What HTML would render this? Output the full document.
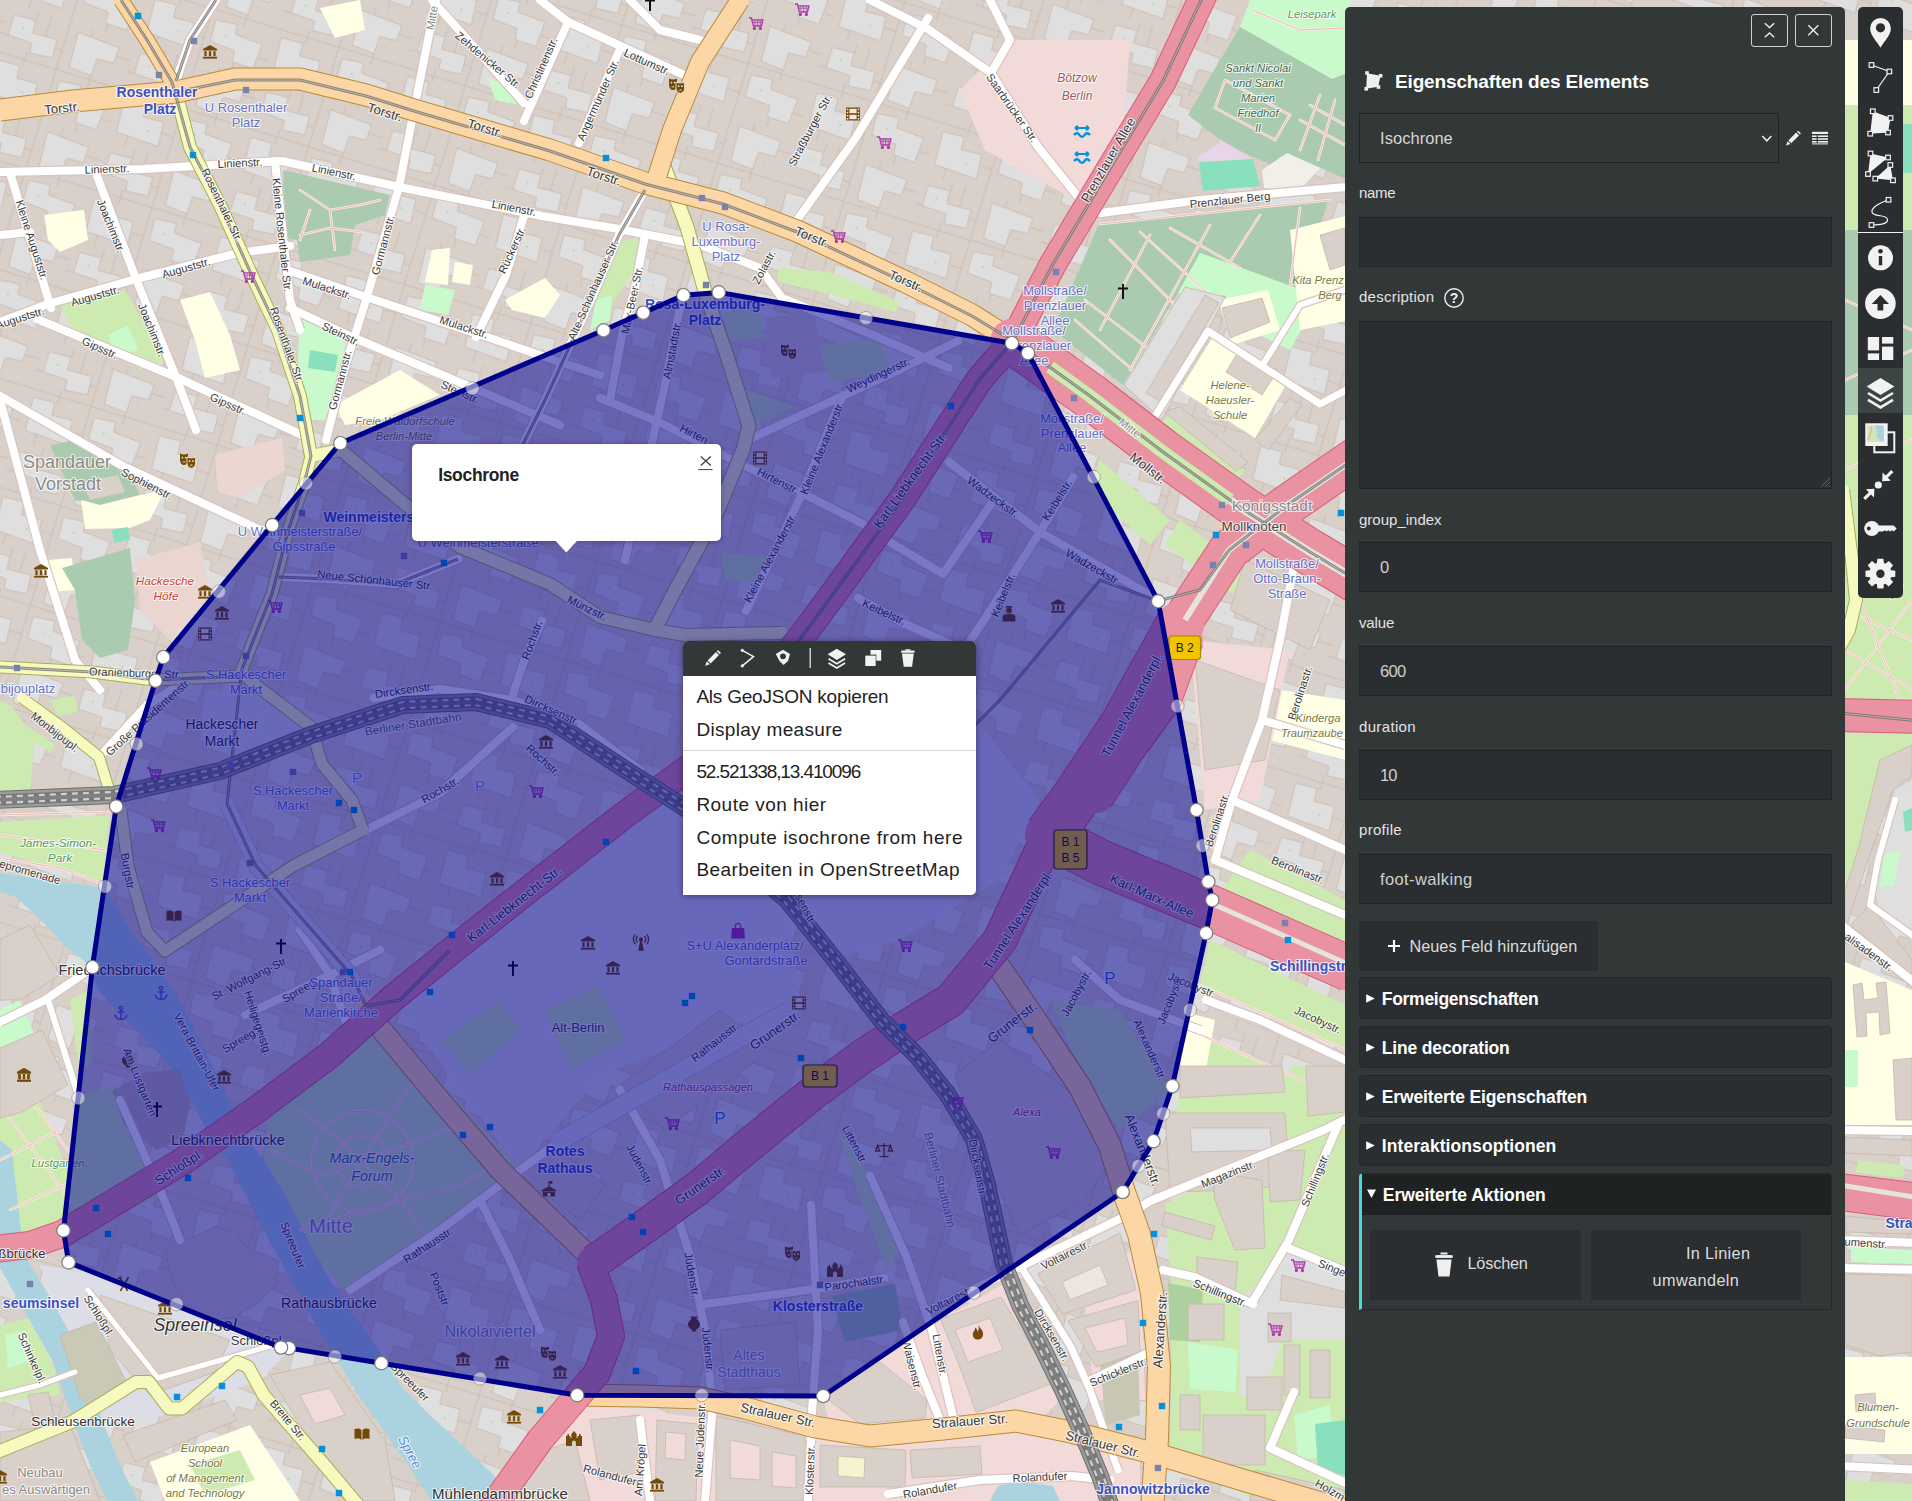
<!DOCTYPE html>
<html lang="de"><head><meta charset="utf-8"><title>uMap</title><style>
html,body{margin:0;padding:0}
body{width:1912px;height:1501px;overflow:hidden;position:relative;background:#ddd6cf;font-family:"Liberation Sans",sans-serif}
#map,#ov{position:absolute;left:0;top:0}

#panel{position:absolute;left:1345px;top:7px;width:500px;height:1500px;background:#323737;border-radius:5px 5px 0 0;}
#panel>*{margin-left:-1345px;margin-top:-7px}
.t{position:absolute;white-space:nowrap;font-family:"Liberation Sans",sans-serif;}
.pbtn{position:absolute;width:37px;height:33px;box-sizing:border-box;border:1px solid #cfd0d0;border-radius:3px;}
.pbtn svg{position:absolute;left:-1px;top:-1px}
.sel{position:absolute;box-sizing:border-box;border:1px solid #1f2324;background:#323737;}
.inp{position:absolute;box-sizing:border-box;border:1px solid #202425;background:#2a2e30;}
.btn{position:absolute;background:#2a2e30;}
.fs{position:absolute;box-sizing:border-box;border:1px solid #222627;background:#2a2e30;border-radius:4px;}
.fso{position:absolute;box-sizing:border-box;border:1px solid #262a2b;border-left:3px solid #46dcd6;background:#323737;border-radius:4px 4px 0 0;}
.fsh{position:absolute;left:0;top:0;right:0;height:41px;background:#1f2223;border-radius:0 4px 0 0}

#tb{position:absolute;left:1858px;top:7px;width:45px;height:591px;background:#2a2e30;border-radius:5px;overflow:hidden}
#pop{position:absolute;left:412px;top:444px;width:309px;height:96.6px;background:#fff;border-radius:5px;box-shadow:0 1px 6px rgba(0,0,0,.3)}
#ctx{position:absolute;left:683px;top:641px;width:293px;height:253.7px;background:#fff;border-radius:5px 5px 5px 0;box-shadow:0 1px 7px rgba(0,0,0,.4);overflow:hidden}
#ctxh{position:absolute;left:0;top:0;width:100%;height:34.5px;background:#323737}
#ctxsep{position:absolute;left:0;top:109px;width:100%;height:1px;background:#d4d4d4}
</style></head><body>
<svg id="map" width="1912" height="1501" viewBox="0 0 1912 1501" font-family="Liberation Sans, sans-serif">
<rect width="1912" height="1501" fill="#ddd6cf"/>
<defs><pattern id="bp" width="132" height="104" patternUnits="userSpaceOnUse" patternTransform="rotate(17) translate(10 0)">
<rect width="132" height="104" fill="#d9d0c9"/>
<polygon points="8.0,10.0 30.0,9.0 31.0,22.0 56.0,21.0 57.0,40.0 34.0,42.0 33.0,32.0 8.0,31.0" fill="#e0dfdf" stroke="#c6b9ae" stroke-width="0.8"/>
<polygon points="74.0,8.0 118.0,11.0 117.0,27.0 100.0,28.0 99.0,46.0 76.0,44.0" fill="#e0dfdf" stroke="#c6b9ae" stroke-width="0.8"/>
<polygon points="6.0,58.0 28.0,57.0 29.0,70.0 50.0,69.0 52.0,94.0 8.0,92.0" fill="#e0dfdf" stroke="#c6b9ae" stroke-width="0.8"/>
<polygon points="70.0,60.0 92.0,58.0 93.0,68.0 122.0,70.0 120.0,96.0 98.0,95.0 97.0,84.0 71.0,82.0" fill="#e0dfdf" stroke="#c6b9ae" stroke-width="0.8"/>
<path d="M0 50 H132 M64 0 V104 M31 0 V9 M31 42 V57 M99 46 V58 M8 31 H0 M57 30 H64 M118 20 H132 M52 80 H64 M122 84 H132 M20 92 V104 M100 95 V104 M44 0 V21 M88 0 V9" stroke="#c6b9ae" stroke-width="0.8" fill="none"/>
<circle cx="20" cy="20" r="1" fill="#b5d6a0"/><circle cx="108" cy="36" r="1" fill="#b5d6a0"/><circle cx="38" cy="82" r="1" fill="#b5d6a0"/><circle cx="84" cy="72" r="1" fill="#b5d6a0"/>
</pattern></defs>
<rect width="1912" height="1501" fill="url(#bp)"/>
<polygon points="1240.0,27.0 1250.0,0.0 1350.0,0.0 1350.0,72.0 1332.0,79.0" fill="#c8facc"/>
<polygon points="1240.0,27.0 1332.0,79.0 1350.0,72.0 1350.0,181.0 1287.0,153.0 1278.0,168.0 1253.0,157.0 1222.0,141.0 1188.0,115.0 1213.0,72.0" fill="#aacbaf"/>
<polygon points="1198.0,157.0 1222.0,141.0 1253.0,159.0 1199.0,163.0" fill="#e8d5e8"/>
<polygon points="1262.0,170.0 1287.0,153.0 1320.0,168.0 1300.0,190.0 1264.0,188.0" fill="#f2efe9"/>
<polygon points="1199.0,162.0 1253.0,159.0 1260.0,186.0 1203.0,191.0" fill="#88e0be"/>
<polygon points="1099.0,224.0 1328.0,200.0 1302.0,290.0 1200.0,253.0 1178.0,293.0 1123.0,385.0 1085.0,355.0 1053.0,330.0" fill="#aacbaf"/>
<polygon points="1200.0,253.0 1302.0,290.0 1318.0,300.0 1290.0,350.0 1250.0,330.0 1225.0,295.0 1190.0,300.0 1178.0,293.0" fill="#c8facc"/>
<polygon points="1010.0,40.0 1130.0,40.0 1120.0,175.0 1075.0,200.0 985.0,150.0 960.0,90.0" fill="#f2dad9"/>
<polygon points="1180.0,390.0 1212.0,338.0 1286.0,385.0 1255.0,438.0" fill="#ffffe5"/>
<polygon points="1218.0,300.0 1268.0,290.0 1280.0,330.0 1232.0,345.0" fill="#ffffe5"/>
<polygon points="1158.0,425.0 1170.0,415.0 1245.0,470.0 1236.0,482.0" fill="#cdebb0"/>
<polygon points="1290.0,230.0 1350.0,215.0 1350.0,320.0 1300.0,330.0" fill="#ffffe5"/>
<polygon points="283.0,170.0 390.0,195.0 385.0,215.0 355.0,225.0 350.0,255.0 300.0,262.0 297.0,240.0 285.0,238.0" fill="#aacbaf"/>
<polygon points="44.0,215.0 84.0,210.0 88.0,240.0 60.0,252.0 48.0,240.0" fill="#ffffe5"/>
<polygon points="320.0,8.0 360.0,0.0 365.0,30.0 335.0,38.0" fill="#ffffe5"/>
<polygon points="488.0,78.0 505.0,85.0 520.0,105.0 495.0,100.0" fill="#c8facc"/>
<polygon points="432.0,250.0 450.0,248.0 448.0,285.0 425.0,282.0" fill="#ffffe5"/>
<polygon points="455.0,262.0 473.0,265.0 470.0,285.0 452.0,282.0" fill="#ffffe5"/>
<polygon points="505.0,300.0 545.0,278.0 560.0,295.0 545.0,318.0 512.0,310.0" fill="#ffffe5"/>
<polygon points="425.0,285.0 455.0,290.0 448.0,315.0 420.0,310.0" fill="#c8facc"/>
<polygon points="60.0,305.0 125.0,290.0 165.0,360.0 140.0,370.0 110.0,345.0 75.0,335.0" fill="#cdebb0"/>
<polygon points="108.0,335.0 128.0,325.0 138.0,350.0 115.0,358.0" fill="#c8facc"/>
<polygon points="180.0,300.0 210.0,292.0 230.0,335.0 240.0,370.0 205.0,378.0 195.0,340.0" fill="#ffffe5"/>
<polygon points="300.0,318.0 340.0,330.0 345.0,350.0 325.0,420.0 305.0,420.0 298.0,360.0" fill="#c8facc"/>
<polygon points="310.0,350.0 338.0,355.0 335.0,372.0 308.0,368.0" fill="#88e0be"/>
<polygon points="335.0,405.0 400.0,370.0 440.0,395.0 380.0,420.0 345.0,425.0" fill="#ffffe5"/>
<polygon points="615.0,242.0 638.0,238.0 640.0,262.0 615.0,300.0 596.0,325.0 598.0,290.0" fill="#cdebb0"/>
<polygon points="596.0,300.0 612.0,295.0 610.0,320.0 590.0,330.0" fill="#c8facc"/>
<polygon points="778.0,268.0 830.0,272.0 900.0,302.0 896.0,312.0 830.0,294.0 778.0,282.0" fill="#cdebb0"/>
<polygon points="50.0,445.0 75.0,440.0 130.0,475.0 140.0,495.0 100.0,505.0 75.0,500.0" fill="#aacbaf"/>
<polygon points="82.0,482.0 118.0,475.0 125.0,492.0 90.0,500.0" fill="#d9d0c9"/>
<polygon points="81.0,500.0 100.0,505.0 140.0,495.0 165.0,490.0 150.0,520.0 130.0,528.0 85.0,529.0" fill="#ffffe5"/>
<polygon points="112.0,530.0 128.0,527.0 130.0,540.0 114.0,543.0" fill="#88e0be"/>
<polygon points="48.0,560.0 72.0,558.0 75.0,590.0 50.0,592.0" fill="#ffffe5"/>
<polygon points="62.0,568.0 130.0,548.0 135.0,600.0 128.0,650.0 100.0,658.0 82.0,640.0 75.0,590.0" fill="#aacbaf"/>
<polygon points="136.0,560.0 200.0,542.0 212.0,600.0 170.0,640.0 140.0,610.0" fill="#ead5d0"/>
<polygon points="215.0,455.0 282.0,438.0 285.0,470.0 240.0,498.0 218.0,492.0" fill="#ecd6d2"/>
<polygon points="0.0,700.0 12.0,706.0 35.0,740.0 30.0,790.0 0.0,792.0" fill="#cdebb0"/>
<polygon points="22.0,722.0 55.0,745.0 50.0,752.0 20.0,733.0" fill="#cdebb0"/>
<polygon points="50.0,700.0 75.0,696.0 78.0,712.0 58.0,716.0" fill="#cdebb0"/>
<polygon points="0.0,822.0 110.0,815.0 103.0,881.0 60.0,870.0 0.0,852.0" fill="#cdebb0"/>
<polygon points="0.0,1090.0 30.0,1075.0 75.0,1190.0 62.0,1232.0 20.0,1240.0 0.0,1200.0" fill="#cdebb0"/>
<polygon points="0.0,1010.0 20.0,1000.0 45.0,1060.0 20.0,1075.0 0.0,1060.0" fill="#c8facc"/>
<polygon points="70.0,1000.0 90.0,990.0 92.0,1060.0 80.0,1075.0" fill="#cdebb0"/>
<polygon points="1215.0,905.0 1345.0,965.0 1345.0,985.0 1212.0,925.0" fill="#cdebb0"/>
<polygon points="1210.0,940.0 1345.0,1005.0 1345.0,1050.0 1200.0,985.0" fill="#cdebb0"/>
<polygon points="1190.0,1030.0 1345.0,1100.0 1345.0,1200.0 1280.0,1170.0 1175.0,1120.0" fill="#cdebb0"/>
<polygon points="1185.0,1012.0 1215.0,1020.0 1205.0,1075.0 1180.0,1070.0" fill="#ffffe5"/>
<polygon points="1165.0,1203.0 1345.0,1125.0 1345.0,1501.0 1255.0,1501.0 1170.0,1452.0 1172.0,1300.0" fill="#cdebb0"/>
<polygon points="1168.0,1283.0 1203.0,1290.0 1200.0,1342.0 1170.0,1340.0" fill="#add19e"/>
<polygon points="1188.0,1342.0 1238.0,1350.0 1235.0,1392.0 1190.0,1389.0" fill="#c8facc"/>
<polygon points="1294.0,1415.0 1330.0,1405.0 1335.0,1455.0 1298.0,1460.0" fill="#c8facc"/>
<polygon points="1315.0,1424.0 1345.0,1420.0 1345.0,1475.0 1318.0,1471.0" fill="#88e0be"/>
<polygon points="1240.0,1300.0 1290.0,1250.0 1345.0,1275.0 1345.0,1340.0 1282.0,1340.0 1262.0,1400.0 1240.0,1395.0" fill="#e0dfdf"/>
<polygon points="1290.0,1066.0 1345.0,1066.0 1345.0,1120.0 1300.0,1125.0" fill="#cdebb0"/>
<polygon points="1280.0,690.0 1345.0,700.0 1345.0,760.0 1270.0,740.0" fill="#ffffe5"/>
<polygon points="1190.0,640.0 1290.0,650.0 1260.0,800.0 1205.0,810.0" fill="#f2dad9"/>
<polygon points="1250.0,850.0 1345.0,900.0 1345.0,960.0 1215.0,900.0" fill="#cdebb0"/>
<polygon points="1100.0,460.0 1170.0,520.0 1150.0,545.0 1090.0,490.0" fill="#cdebb0"/>
<polygon points="1180.0,520.0 1260.0,580.0 1240.0,600.0 1165.0,545.0" fill="#cdebb0"/>
<polygon points="823.0,1396.0 890.0,1350.0 1010.0,1280.0 1060.0,1400.0 1040.0,1420.0 950.0,1425.0 830.0,1430.0" fill="#f2dad9"/>
<polygon points="1080.0,1260.0 1140.0,1250.0 1145.0,1400.0 1095.0,1400.0" fill="#f2dad9"/>
<polygon points="985.0,1440.0 1050.0,1435.0 1055.0,1470.0 990.0,1475.0" fill="#cdebb0"/>
<polygon points="0.0,1325.0 30.0,1318.0 55.0,1370.0 60.0,1395.0 0.0,1402.0" fill="#cdebb0"/>
<polygon points="5.0,1335.0 25.0,1330.0 35.0,1360.0 8.0,1368.0" fill="#c8facc"/>
<polygon points="150.0,1462.0 250.0,1425.0 300.0,1501.0 165.0,1501.0" fill="#ffffe5"/>
<polygon points="190.0,1465.0 240.0,1450.0 255.0,1480.0 205.0,1495.0" fill="#cdebb0"/>
<polygon points="560.0,1400.0 840.0,1435.0 960.0,1430.0 1050.0,1425.0 1140.0,1450.0 1140.0,1501.0 480.0,1501.0" fill="#f2dad9"/>
<polygon points="40.0,1265.0 110.0,1275.0 290.0,1350.0 260.0,1380.0 150.0,1420.0 90.0,1420.0 60.0,1320.0" fill="#dddde8"/>
<polygon points="100.0,1295.0 230.0,1340.0 215.0,1372.0 150.0,1395.0 110.0,1350.0" fill="#d9d0c9"/>
<polygon points="1100.0,1365.0 1138.0,1352.0 1140.0,1415.0 1106.0,1425.0" fill="#c7c7b4"/>
<polygon points="1845.0,40.0 1912.0,40.0 1912.0,105.0 1845.0,105.0" fill="#ffffe5"/>
<polygon points="1845.0,105.0 1912.0,105.0 1912.0,700.0 1845.0,700.0" fill="#cdebb0"/>
<polygon points="1845.0,230.0 1912.0,230.0 1912.0,415.0 1845.0,415.0" fill="#aacbaf"/>
<polygon points="1898.0,124.0 1912.0,124.0 1912.0,173.0 1898.0,173.0" fill="#88e0be"/>
<polygon points="1845.0,733.0 1912.0,733.0 1912.0,760.0 1880.0,800.0 1862.0,860.0 1845.0,905.0" fill="#cdebb0"/>
<polygon points="1895.0,790.0 1912.0,780.0 1912.0,940.0 1880.0,915.0 1872.0,870.0" fill="#e0dfdf"/>
<polygon points="1903.0,812.0 1912.0,808.0 1912.0,830.0 1905.0,832.0" fill="#88e0be"/>
<polygon points="1884.0,855.0 1900.0,850.0 1894.0,885.0 1880.0,888.0" fill="#c8facc"/>
<polygon points="1845.0,962.0 1912.0,990.0 1912.0,1125.0 1845.0,1125.0" fill="#ffffe5"/>
<polygon points="1845.0,1050.0 1858.0,1050.0 1858.0,1087.0 1845.0,1087.0" fill="#c8facc"/>
<polygon points="1858.0,1160.0 1905.0,1166.0 1903.0,1178.0 1856.0,1172.0" fill="#cdebb0"/>
<polygon points="1851.0,1247.0 1912.0,1250.0 1912.0,1264.0 1851.0,1262.0" fill="#c8facc"/>
<polygon points="1850.0,1285.0 1895.0,1288.0 1890.0,1330.0 1850.0,1328.0" fill="#e0dfdf"/>
<polygon points="1845.0,1357.0 1912.0,1357.0 1912.0,1454.0 1845.0,1454.0" fill="#ffffe5"/>
<polygon points="1845.0,1480.0 1912.0,1484.0 1912.0,1501.0 1845.0,1501.0" fill="#cdebb0"/>
<polygon points="818.0,345.0 880.0,338.0 891.0,372.0 830.0,382.0" fill="#cdebb0"/>
<polygon points="724.0,312.0 760.0,310.0 764.0,338.0 730.0,341.0" fill="#cdebb0"/>
<polygon points="746.0,389.0 794.0,407.0 755.0,426.0" fill="#cdebb0"/>
<polygon points="721.0,553.0 765.0,556.0 770.0,583.0 725.0,580.0" fill="#cdebb0"/>
<polygon points="765.0,318.0 815.0,312.0 822.0,372.0 772.0,378.0" fill="#d9d0c9"/>
<polygon points="268.0,1118.0 385.0,1020.0 520.0,1170.0 345.0,1290.0 313.0,1251.0 288.0,1200.0 264.0,1160.0" fill="#cdebb0"/>
<polygon points="400.0,1008.0 700.0,775.0 740.0,850.0 790.0,920.0 800.0,1000.0 600.0,1075.0 520.0,1170.0" fill="#dddde8"/>
<polygon points="545.0,1010.0 600.0,985.0 625.0,1040.0 570.0,1070.0" fill="#cdebb0"/>
<polygon points="440.0,1040.0 500.0,1000.0 520.0,1030.0 470.0,1075.0" fill="#cdebb0"/>
<polygon points="790.0,690.0 900.0,640.0 960.0,700.0 1040.0,800.0 1000.0,880.0 900.0,940.0 830.0,960.0 787.0,900.0 736.0,855.0 700.0,790.0" fill="#dddde8"/>
<polygon points="205.0,690.0 300.0,700.0 320.0,740.0 250.0,760.0 200.0,740.0" fill="#dddde8"/>
<polygon points="78.0,1095.0 118.0,1085.0 135.0,1125.0 165.0,1195.0 95.0,1222.0 70.0,1225.0" fill="#cdebb0"/>
<polygon points="1050.0,1000.0 1120.0,1010.0 1170.0,1090.0 1120.0,1130.0 1085.0,1080.0" fill="#cdebb0"/>
<polygon points="838.0,1130.0 872.0,1180.0 900.0,1250.0 888.0,1270.0 862.0,1205.0" fill="#cdebb0"/>
<polygon points="832.0,1296.0 895.0,1284.0 903.0,1330.0 845.0,1342.0" fill="#aacbaf"/>
<polygon points="0.0,873.0 105.0,888.0 116.0,905.0 132.0,933.0 149.0,955.0 176.0,993.0 198.0,1037.0 220.0,1081.0 235.0,1114.0 252.0,1145.0 264.0,1160.0 288.0,1200.0 313.0,1251.0 341.0,1298.0 366.0,1332.0 386.0,1361.0 403.0,1389.0 430.0,1415.0 476.0,1458.0 520.0,1501.0 432.0,1501.0 403.0,1458.0 377.0,1421.0 354.0,1389.0 335.0,1355.0 322.0,1336.0 303.0,1301.0 275.0,1251.0 247.0,1198.0 226.0,1157.0 207.0,1131.0 193.0,1103.0 176.0,1074.0 154.0,1048.0 123.0,1017.0 99.0,991.0 88.0,964.0 66.0,947.0 44.0,923.0 15.0,896.0 0.0,892.0" fill="#aad3df"/>
<polygon points="0.0,1140.0 12.0,1150.0 22.0,1240.0 0.0,1240.0" fill="#aad3df"/>
<polygon points="0.0,1268.0 24.0,1310.0 53.0,1362.0 75.0,1426.0 92.0,1470.0 108.0,1501.0 138.0,1501.0 118.0,1461.0 101.0,1417.0 79.0,1350.0 50.0,1297.0 26.0,1258.0 8.0,1255.0 0.0,1257.0" fill="#aad3df"/>
<polygon points="998.0,1486.0 1020.0,1481.0 1053.0,1486.0 1060.0,1501.0 990.0,1501.0" fill="#aad3df"/>
<g fill="none" stroke-linecap="round">
<path d="M300.0 1110.0 L340.0 1140.0 L362.0 1161.0 L400.0 1200.0 L430.0 1240.0" stroke="#fbeeed" stroke-width="2.6"/>
<path d="M330.0 1215.0 L362.0 1161.0 L400.0 1100.0 L420.0 1075.0" stroke="#fbeeed" stroke-width="2.6"/>
<path d="M270.0 1150.0 L320.0 1175.0 L362.0 1161.0 L420.0 1140.0 L470.0 1120.0" stroke="#fbeeed" stroke-width="2.6"/>
<path d="M300.0 1230.0 L350.0 1215.0 L400.0 1200.0 L460.0 1185.0 L505.0 1160.0" stroke="#fbeeed" stroke-width="2.6"/>
<path d="M1110.0 240.0 L1180.0 310.0" stroke="#fbeeed" stroke-width="2.6"/>
<path d="M1140.0 232.0 L1215.0 300.0" stroke="#fbeeed" stroke-width="2.6"/>
<path d="M1170.0 228.0 L1240.0 268.0" stroke="#fbeeed" stroke-width="2.6"/>
<path d="M1085.0 300.0 L1150.0 350.0" stroke="#fbeeed" stroke-width="2.6"/>
<path d="M1075.0 320.0 L1135.0 372.0" stroke="#fbeeed" stroke-width="2.6"/>
<path d="M1150.0 235.0 L1100.0 330.0" stroke="#fbeeed" stroke-width="2.6"/>
<path d="M1210.0 225.0 L1130.0 370.0" stroke="#fbeeed" stroke-width="2.6"/>
<path d="M1260.0 215.0 L1230.0 262.0" stroke="#fbeeed" stroke-width="2.6"/>
<path d="M1300.0 208.0 L1290.0 286.0" stroke="#fbeeed" stroke-width="2.6"/>
<path d="M1100.0 224.0 L1330.0 200.0" stroke="#fbeeed" stroke-width="2.6"/>
<path d="M1225.0 80.0 L1290.0 115.0 L1275.0 140.0 L1215.0 108.0 L1225.0 80.0" stroke="#fbeeed" stroke-width="2.6"/>
<path d="M1300.0 120.0 L1345.0 145.0" stroke="#fbeeed" stroke-width="2.6"/>
<path d="M1310.0 105.0 L1345.0 125.0" stroke="#fbeeed" stroke-width="2.6"/>
<path d="M1320.0 95.0 L1300.0 150.0" stroke="#fbeeed" stroke-width="2.6"/>
<path d="M1335.0 100.0 L1318.0 160.0" stroke="#fbeeed" stroke-width="2.6"/>
<path d="M1252.0 10.0 L1300.0 30.0 L1345.0 28.0" stroke="#fbeeed" stroke-width="2.6"/>
<path d="M0.0 1105.0 L70.0 1200.0" stroke="#fbeeed" stroke-width="2.6"/>
<path d="M20.0 1085.0 L75.0 1160.0" stroke="#fbeeed" stroke-width="2.6"/>
<path d="M0.0 1160.0 L60.0 1130.0" stroke="#fbeeed" stroke-width="2.6"/>
<path d="M10.0 1210.0 L75.0 1180.0" stroke="#fbeeed" stroke-width="2.6"/>
<path d="M0.0 835.0 L105.0 850.0" stroke="#fbeeed" stroke-width="2.6"/>
<path d="M0.0 858.0 L60.0 868.0 L103.0 884.0" stroke="#fbeeed" stroke-width="2.6"/>
<path d="M0.0 815.0 L110.0 812.0" stroke="#fbeeed" stroke-width="2.6"/>
<path d="M1845.0 610.0 L1912.0 640.0" stroke="#fbeeed" stroke-width="2.6"/>
<path d="M1845.0 690.0 L1912.0 600.0" stroke="#fbeeed" stroke-width="2.6"/>
<path d="M1860.0 600.0 L1900.0 700.0" stroke="#fbeeed" stroke-width="2.6"/>
<path d="M1845.0 650.0 L1912.0 690.0" stroke="#fbeeed" stroke-width="2.6"/>
<path d="M1845.0 300.0 L1912.0 330.0" stroke="#fbeeed" stroke-width="2.6"/>
<path d="M1845.0 380.0 L1912.0 350.0" stroke="#fbeeed" stroke-width="2.6"/>
<path d="M1845.0 470.0 L1912.0 440.0" stroke="#fbeeed" stroke-width="2.6"/>
<path d="M1215.0 925.0 L1345.0 985.0" stroke="#fbeeed" stroke-width="2.6"/>
<path d="M1200.0 985.0 L1345.0 1050.0" stroke="#fbeeed" stroke-width="2.6"/>
<path d="M1190.0 1030.0 L1345.0 1100.0" stroke="#fbeeed" stroke-width="2.6"/>
<path d="M300.0 190.0 L330.0 210.0 L360.0 205.0 L380.0 200.0" stroke="#fbeeed" stroke-width="2.6"/>
<path d="M330.0 210.0 L335.0 250.0" stroke="#fbeeed" stroke-width="2.6"/>
<path d="M300.0 235.0 L330.0 228.0 L362.0 232.0" stroke="#fbeeed" stroke-width="2.6"/>
<path d="M310.0 210.0 L300.0 240.0" stroke="#fbeeed" stroke-width="2.6"/>
<path d="M300.0 1110.0 L340.0 1140.0 L362.0 1161.0 L400.0 1200.0 L430.0 1240.0" stroke="#f3b8b0" stroke-width="1"/>
<path d="M330.0 1215.0 L362.0 1161.0 L400.0 1100.0 L420.0 1075.0" stroke="#f3b8b0" stroke-width="1"/>
<path d="M270.0 1150.0 L320.0 1175.0 L362.0 1161.0 L420.0 1140.0 L470.0 1120.0" stroke="#f3b8b0" stroke-width="1"/>
<path d="M300.0 1230.0 L350.0 1215.0 L400.0 1200.0 L460.0 1185.0 L505.0 1160.0" stroke="#f3b8b0" stroke-width="1"/>
<path d="M1110.0 240.0 L1180.0 310.0" stroke="#f3b8b0" stroke-width="1"/>
<path d="M1140.0 232.0 L1215.0 300.0" stroke="#f3b8b0" stroke-width="1"/>
<path d="M1170.0 228.0 L1240.0 268.0" stroke="#f3b8b0" stroke-width="1"/>
<path d="M1085.0 300.0 L1150.0 350.0" stroke="#f3b8b0" stroke-width="1"/>
<path d="M1075.0 320.0 L1135.0 372.0" stroke="#f3b8b0" stroke-width="1"/>
<path d="M1150.0 235.0 L1100.0 330.0" stroke="#f3b8b0" stroke-width="1"/>
<path d="M1210.0 225.0 L1130.0 370.0" stroke="#f3b8b0" stroke-width="1"/>
<path d="M1260.0 215.0 L1230.0 262.0" stroke="#f3b8b0" stroke-width="1"/>
<path d="M1300.0 208.0 L1290.0 286.0" stroke="#f3b8b0" stroke-width="1"/>
<path d="M1100.0 224.0 L1330.0 200.0" stroke="#f3b8b0" stroke-width="1"/>
<path d="M1225.0 80.0 L1290.0 115.0 L1275.0 140.0 L1215.0 108.0 L1225.0 80.0" stroke="#f3b8b0" stroke-width="1"/>
<path d="M1300.0 120.0 L1345.0 145.0" stroke="#f3b8b0" stroke-width="1"/>
<path d="M1310.0 105.0 L1345.0 125.0" stroke="#f3b8b0" stroke-width="1"/>
<path d="M1320.0 95.0 L1300.0 150.0" stroke="#f3b8b0" stroke-width="1"/>
<path d="M1335.0 100.0 L1318.0 160.0" stroke="#f3b8b0" stroke-width="1"/>
<path d="M1252.0 10.0 L1300.0 30.0 L1345.0 28.0" stroke="#f3b8b0" stroke-width="1"/>
<path d="M0.0 1105.0 L70.0 1200.0" stroke="#f3b8b0" stroke-width="1"/>
<path d="M20.0 1085.0 L75.0 1160.0" stroke="#f3b8b0" stroke-width="1"/>
<path d="M0.0 1160.0 L60.0 1130.0" stroke="#f3b8b0" stroke-width="1"/>
<path d="M10.0 1210.0 L75.0 1180.0" stroke="#f3b8b0" stroke-width="1"/>
<path d="M0.0 835.0 L105.0 850.0" stroke="#f3b8b0" stroke-width="1"/>
<path d="M0.0 858.0 L60.0 868.0 L103.0 884.0" stroke="#f3b8b0" stroke-width="1"/>
<path d="M0.0 815.0 L110.0 812.0" stroke="#f3b8b0" stroke-width="1"/>
<path d="M1845.0 610.0 L1912.0 640.0" stroke="#f3b8b0" stroke-width="1"/>
<path d="M1845.0 690.0 L1912.0 600.0" stroke="#f3b8b0" stroke-width="1"/>
<path d="M1860.0 600.0 L1900.0 700.0" stroke="#f3b8b0" stroke-width="1"/>
<path d="M1845.0 650.0 L1912.0 690.0" stroke="#f3b8b0" stroke-width="1"/>
<path d="M1845.0 300.0 L1912.0 330.0" stroke="#f3b8b0" stroke-width="1"/>
<path d="M1845.0 380.0 L1912.0 350.0" stroke="#f3b8b0" stroke-width="1"/>
<path d="M1845.0 470.0 L1912.0 440.0" stroke="#f3b8b0" stroke-width="1"/>
<path d="M1215.0 925.0 L1345.0 985.0" stroke="#f3b8b0" stroke-width="1"/>
<path d="M1200.0 985.0 L1345.0 1050.0" stroke="#f3b8b0" stroke-width="1"/>
<path d="M1190.0 1030.0 L1345.0 1100.0" stroke="#f3b8b0" stroke-width="1"/>
<path d="M300.0 190.0 L330.0 210.0 L360.0 205.0 L380.0 200.0" stroke="#f3b8b0" stroke-width="1"/>
<path d="M330.0 210.0 L335.0 250.0" stroke="#f3b8b0" stroke-width="1"/>
<path d="M300.0 235.0 L330.0 228.0 L362.0 232.0" stroke="#f3b8b0" stroke-width="1"/>
<path d="M310.0 210.0 L300.0 240.0" stroke="#f3b8b0" stroke-width="1"/>
<circle cx="362.5" cy="1161" r="50" stroke="#fbeeed" stroke-width="2.6"/><circle cx="362.5" cy="1161" r="50" stroke="#f3b8b0" stroke-width="1"/>
<circle cx="362.5" cy="1161" r="26" stroke="#fbeeed" stroke-width="2.6"/><circle cx="362.5" cy="1161" r="26" stroke="#f3b8b0" stroke-width="1"/>
</g>
<polygon points="113.0,1091.0 146.0,1073.0 179.0,1070.0 190.0,1102.0 183.0,1135.0 157.0,1150.0 124.0,1124.0" fill="#c9beb5" stroke="#c4b7ac" stroke-width="0.8"/>
<polygon points="165.0,1251.0 216.0,1226.0 235.0,1235.0 278.0,1282.0 260.0,1301.0 235.0,1317.0 203.0,1320.0 175.0,1288.0" fill="#d9d0c9" stroke="#c4b7ac" stroke-width="0.8"/>
<polygon points="0.0,1048.0 42.0,1030.0 68.0,1085.0 22.0,1112.0 0.0,1118.0" fill="#d9d0c9" stroke="#c4b7ac" stroke-width="0.8"/>
<polygon points="0.0,940.0 30.0,925.0 60.0,975.0 20.0,1000.0 0.0,1000.0" fill="#d9d0c9" stroke="#c4b7ac" stroke-width="0.8"/>
<polygon points="955.0,1075.0 1000.0,1040.0 1075.0,1095.0 1110.0,1160.0 1085.0,1200.0 1020.0,1235.0 985.0,1160.0" fill="#d9d0c9" stroke="#c4b7ac" stroke-width="0.8"/>
<polygon points="545.0,1140.0 605.0,1185.0 580.0,1220.0 520.0,1175.0" fill="#d9d0c9" stroke="#c4b7ac" stroke-width="0.8"/>
<polygon points="620.0,1085.0 720.0,1010.0 770.0,1050.0 665.0,1130.0" fill="#d9d0c9" stroke="#c4b7ac" stroke-width="0.8"/>
<polygon points="760.0,830.0 830.0,800.0 870.0,860.0 800.0,890.0" fill="#d9d0c9" stroke="#c4b7ac" stroke-width="0.8"/>
<polygon points="1195.0,660.0 1280.0,690.0 1265.0,760.0 1205.0,770.0" fill="#d9d0c9" stroke="#c4b7ac" stroke-width="0.8"/>
<polygon points="1245.0,560.0 1330.0,600.0 1310.0,650.0 1230.0,610.0" fill="#d9d0c9" stroke="#c4b7ac" stroke-width="0.8"/>
<polygon points="100.0,1295.0 230.0,1340.0 215.0,1372.0 150.0,1395.0 110.0,1350.0" fill="#d9d0c9" stroke="#c4b7ac" stroke-width="0.8"/>
<polygon points="720.0,1330.0 795.0,1322.0 800.0,1385.0 725.0,1390.0" fill="#d9d0c9" stroke="#c4b7ac" stroke-width="0.8"/>
<polygon points="1880.0,760.0 1912.0,745.0 1912.0,775.0 1893.0,790.0 1868.0,860.0 1850.0,915.0 1845.0,935.0 1845.0,890.0 1858.0,850.0" fill="#d9d0c9" stroke="#c4b7ac" stroke-width="0.8"/>
<polygon points="1850.0,925.0 1912.0,975.0 1912.0,960.0 1870.0,905.0" fill="#d9d0c9" stroke="#c4b7ac" stroke-width="0.8"/>
<polygon points="1853.0,985.0 1862.0,983.0 1864.0,1000.0 1878.0,998.0 1876.0,983.0 1886.0,982.0 1890.0,1033.0 1880.0,1035.0 1879.0,1012.0 1866.0,1013.0 1867.0,1036.0 1857.0,1037.0" fill="#d9d0c9" stroke="#c4b7ac" stroke-width="0.8"/>
<polygon points="1893.0,1060.0 1912.0,1058.0 1912.0,1120.0 1896.0,1120.0" fill="#d9d0c9" stroke="#c4b7ac" stroke-width="0.8"/>
<polygon points="1845.0,1137.0 1912.0,1140.0 1912.0,1156.0 1845.0,1153.0" fill="#d9d0c9" stroke="#c4b7ac" stroke-width="0.8"/>
<polygon points="1845.0,1216.0 1912.0,1222.0 1912.0,1234.0 1845.0,1232.0" fill="#d9d0c9" stroke="#c4b7ac" stroke-width="0.8"/>
<polygon points="1845.0,1274.0 1912.0,1276.0 1912.0,1352.0 1880.0,1356.0 1845.0,1345.0" fill="#d9d0c9" stroke="#c4b7ac" stroke-width="0.8"/>
<polygon points="1855.0,1395.0 1875.0,1393.0 1876.0,1410.0 1856.0,1412.0" fill="#d9d0c9" stroke="#c4b7ac" stroke-width="0.8"/>
<polygon points="1845.0,1425.0 1885.0,1430.0 1884.0,1442.0 1845.0,1438.0" fill="#d9d0c9" stroke="#c4b7ac" stroke-width="0.8"/>
<polygon points="1180.0,1066.0 1282.0,1066.0 1285.0,1092.0 1180.0,1098.0" fill="#d9d0c9" stroke="#c4b7ac" stroke-width="0.8"/>
<polygon points="1165.0,1113.0 1285.0,1113.0 1290.0,1185.0 1240.0,1190.0 1170.0,1192.0" fill="#d9d0c9" stroke="#c4b7ac" stroke-width="0.8"/>
<polygon points="1190.0,1128.0 1270.0,1128.0 1272.0,1150.0 1192.0,1152.0" fill="#e0dfdf" stroke="#c4b7ac" stroke-width="0.8"/>
<polygon points="1165.0,1212.0 1215.0,1226.0 1211.0,1240.0 1162.0,1226.0" fill="#d9d0c9" stroke="#c4b7ac" stroke-width="0.8"/>
<polygon points="1212.0,1172.0 1262.0,1180.0 1265.0,1248.0 1235.0,1250.0 1215.0,1200.0" fill="#d9d0c9" stroke="#c4b7ac" stroke-width="0.8"/>
<polygon points="1268.0,1152.0 1305.0,1150.0 1300.0,1200.0 1270.0,1202.0" fill="#d9d0c9" stroke="#c4b7ac" stroke-width="0.8"/>
<polygon points="1197.0,1257.0 1238.0,1262.0 1235.0,1290.0 1197.0,1285.0" fill="#d9d0c9" stroke="#c4b7ac" stroke-width="0.8"/>
<polygon points="1306.0,1066.0 1345.0,1066.0 1345.0,1112.0 1308.0,1116.0" fill="#d9d0c9" stroke="#c4b7ac" stroke-width="0.8"/>
<polygon points="1282.0,1275.0 1345.0,1292.0 1345.0,1308.0 1280.0,1300.0" fill="#d9d0c9" stroke="#c4b7ac" stroke-width="0.8"/>
<polygon points="1188.0,1304.0 1224.0,1304.0 1224.0,1340.0 1188.0,1340.0" fill="#d9d0c9" stroke="#c4b7ac" stroke-width="0.8"/>
<polygon points="1268.0,1313.0 1291.0,1313.0 1291.0,1342.0 1268.0,1342.0" fill="#d9d0c9" stroke="#c4b7ac" stroke-width="0.8"/>
<polygon points="1284.0,1345.0 1300.0,1345.0 1300.0,1395.0 1284.0,1395.0" fill="#d9d0c9" stroke="#c4b7ac" stroke-width="0.8"/>
<polygon points="1310.0,1350.0 1330.0,1350.0 1330.0,1398.0 1310.0,1398.0" fill="#d9d0c9" stroke="#c4b7ac" stroke-width="0.8"/>
<polygon points="1203.0,1415.0 1265.0,1415.0 1265.0,1465.0 1203.0,1465.0" fill="#d9d0c9" stroke="#c4b7ac" stroke-width="0.8"/>
<polygon points="1247.0,1377.0 1282.0,1377.0 1282.0,1410.0 1247.0,1410.0" fill="#d9d0c9" stroke="#c4b7ac" stroke-width="0.8"/>
<polygon points="1180.0,1395.0 1200.0,1395.0 1200.0,1430.0 1180.0,1430.0" fill="#d9d0c9" stroke="#c4b7ac" stroke-width="0.8"/>
<polygon points="1255.0,1470.0 1345.0,1490.0 1345.0,1501.0 1250.0,1501.0" fill="#d9d0c9" stroke="#c4b7ac" stroke-width="0.8"/>
<polygon points="940.5,1319.0 1001.0,1297.0 1034.0,1351.0 1054.0,1382.5 976.0,1412.6 962.0,1372.5" fill="#d9d0c9" stroke="#c4b7ac" stroke-width="0.8"/>
<polygon points="955.0,1330.0 990.0,1318.0 1003.0,1350.0 968.0,1362.0" fill="#f2dad9" stroke="#c4b7ac" stroke-width="0.8"/>
<polygon points="822.0,1395.0 880.0,1362.0 927.0,1400.0 925.0,1418.0 860.0,1424.0" fill="#d9d0c9" stroke="#c4b7ac" stroke-width="0.8"/>
<polygon points="1037.6,1273.7 1120.0,1233.0 1136.0,1290.0 1062.7,1314.0" fill="#d9d0c9" stroke="#c4b7ac" stroke-width="0.8"/>
<polygon points="1062.0,1282.0 1100.0,1265.0 1108.0,1285.0 1070.0,1300.0" fill="#ece6df" stroke="#c4b7ac" stroke-width="0.8"/>
<polygon points="1067.7,1320.6 1138.0,1300.5 1140.0,1352.0 1096.0,1367.0" fill="#d9d0c9" stroke="#c4b7ac" stroke-width="0.8"/>
<polygon points="1085.0,1328.0 1125.0,1318.0 1128.0,1345.0 1097.0,1352.0" fill="#f2dad9" stroke="#c4b7ac" stroke-width="0.8"/>
<polygon points="657.0,1420.0 698.0,1424.0 696.0,1501.0 655.0,1501.0" fill="#d9d0c9" stroke="#c4b7ac" stroke-width="0.8"/>
<polygon points="666.0,1432.0 686.0,1434.0 685.0,1460.0 665.0,1458.0" fill="#f2dad9" stroke="#c4b7ac" stroke-width="0.8"/>
<polygon points="716.0,1416.0 805.0,1436.0 806.0,1501.0 716.0,1501.0" fill="#d9d0c9" stroke="#c4b7ac" stroke-width="0.8"/>
<polygon points="730.0,1440.0 760.0,1446.0 760.0,1480.0 730.0,1478.0" fill="#f2dad9" stroke="#c4b7ac" stroke-width="0.8"/>
<polygon points="772.0,1452.0 796.0,1456.0 796.0,1488.0 772.0,1486.0" fill="#f2dad9" stroke="#c4b7ac" stroke-width="0.8"/>
<polygon points="820.0,1445.0 906.0,1450.0 905.0,1487.0 820.0,1487.0" fill="#d9d0c9" stroke="#c4b7ac" stroke-width="0.8"/>
<polygon points="838.0,1456.0 865.0,1458.0 864.0,1478.0 838.0,1476.0" fill="#f7f3d0" stroke="#c4b7ac" stroke-width="0.8"/>
<polygon points="910.0,1450.0 980.0,1446.0 982.0,1474.0 912.0,1478.0" fill="#d9d0c9" stroke="#c4b7ac" stroke-width="0.8"/>
<polygon points="590.0,1420.0 640.0,1415.0 650.0,1470.0 600.0,1480.0" fill="#d9d0c9" stroke="#c4b7ac" stroke-width="0.8"/>
<polygon points="520.0,1460.0 575.0,1440.0 590.0,1501.0 510.0,1501.0" fill="#d9d0c9" stroke="#c4b7ac" stroke-width="0.8"/>
<polygon points="60.0,1335.0 96.0,1322.0 128.0,1385.0 96.0,1410.0 80.0,1398.0" fill="#c9c9b5" stroke="#c4b7ac" stroke-width="0.8"/>
<polygon points="0.0,1432.0 70.0,1425.0 100.0,1501.0 0.0,1501.0" fill="#d9d0c9" stroke="#c4b7ac" stroke-width="0.8"/>
<polygon points="123.0,1435.0 225.0,1400.0 237.0,1420.0 135.0,1462.0" fill="#d9d0c9" stroke="#c4b7ac" stroke-width="0.8"/>
<polygon points="270.0,1375.0 330.0,1362.0 385.0,1440.0 395.0,1501.0 345.0,1501.0" fill="#d9d0c9" stroke="#c4b7ac" stroke-width="0.8"/>
<polygon points="300.0,1395.0 330.0,1388.0 345.0,1415.0 315.0,1424.0" fill="#f2dad9" stroke="#c4b7ac" stroke-width="0.8"/>
<polygon points="28.0,1395.0 48.0,1392.0 55.0,1420.0 35.0,1424.0" fill="#d9d0c9" stroke="#c4b7ac" stroke-width="0.8"/>
<polygon points="1124.0,385.0 1185.0,287.0 1225.0,297.0 1162.0,420.0" fill="#e0dfdf" stroke="#c4b7ac" stroke-width="0.8"/>
<polygon points="1146.0,393.0 1205.0,295.0 1219.0,303.0 1160.0,401.0" fill="#d9d0c9" stroke="#c4b7ac" stroke-width="0.8"/>
<polygon points="1164.5,412.0 1180.0,406.6 1248.5,462.6 1236.0,471.0" fill="#d9d0c9" stroke="#c4b7ac" stroke-width="0.8"/>
<polygon points="1222.0,308.0 1262.0,298.0 1270.0,322.0 1230.0,338.0" fill="#d9d0c9" stroke="#c4b7ac" stroke-width="0.8"/>
<polygon points="1238.0,352.0 1275.0,375.0 1262.0,395.0 1226.0,372.0" fill="#d9d0c9" stroke="#c4b7ac" stroke-width="0.8"/>
<polygon points="1255.0,440.0 1290.0,398.0 1302.0,405.0 1268.0,450.0" fill="#d9d0c9" stroke="#c4b7ac" stroke-width="0.8"/>
<polygon points="1320.0,235.0 1345.0,228.0 1345.0,265.0 1330.0,270.0" fill="#d9d0c9" stroke="#c4b7ac" stroke-width="0.8"/>
<g fill="none" stroke-linejoin="round" stroke-linecap="butt">
<path d="M0.0 172.0 L143.0 169.0 L282.0 161.0 L399.0 187.0 L542.0 216.0 L619.0 229.0 L700.0 245.0 L760.0 268.0 L782.0 298.0 L873.0 335.0 L949.0 368.0" stroke="#d8c4bf" stroke-width="10.4"/>
<path d="M11.0 176.0 L51.0 308.0" stroke="#d8c4bf" stroke-width="10.4"/>
<path d="M97.0 176.0 L136.0 279.0 L176.0 377.0 L196.0 430.0" stroke="#d8c4bf" stroke-width="10.4"/>
<path d="M0.0 322.0 L48.0 304.0 L136.0 279.0 L238.0 253.0 L290.0 246.0" stroke="#d8c4bf" stroke-width="10.4"/>
<path d="M275.0 161.0 L282.0 227.0 L290.0 300.0 L300.0 330.0" stroke="#d8c4bf" stroke-width="10.4"/>
<path d="M436.0 0.0 L414.0 110.0 L399.0 187.0 L366.0 300.0 L344.0 370.0 L326.0 440.0" stroke="#d8c4bf" stroke-width="10.4"/>
<path d="M290.0 271.0 L366.0 297.0 L487.0 337.0 L557.0 361.0 L600.0 375.0" stroke="#d8c4bf" stroke-width="10.4"/>
<path d="M290.0 308.0 L352.0 337.0 L473.0 388.0 L560.0 425.0" stroke="#d8c4bf" stroke-width="10.4"/>
<path d="M524.0 216.0 L506.0 275.0 L476.0 337.0" stroke="#d8c4bf" stroke-width="10.4"/>
<path d="M37.0 319.0 L176.0 377.0 L304.0 436.0" stroke="#d8c4bf" stroke-width="10.4"/>
<path d="M0.0 396.0 L121.0 465.0 L256.0 528.0 L275.0 535.0" stroke="#d8c4bf" stroke-width="10.4"/>
<path d="M645.0 190.0 L619.0 235.0 L594.0 293.0 L572.0 341.0 L545.0 400.0 L520.0 450.0" stroke="#d8c4bf" stroke-width="10.4"/>
<path d="M645.0 235.0 L634.0 293.0 L623.0 330.0 L610.0 400.0" stroke="#d8c4bf" stroke-width="10.4"/>
<path d="M568.0 22.0 L524.0 121.0" stroke="#d8c4bf" stroke-width="10.4"/>
<path d="M619.0 51.0 L579.0 143.0" stroke="#d8c4bf" stroke-width="10.4"/>
<path d="M568.0 22.0 L693.0 79.0" stroke="#d8c4bf" stroke-width="10.4"/>
<path d="M432.0 0.0 L524.0 103.0" stroke="#d8c4bf" stroke-width="10.4"/>
<path d="M0.0 400.0 L40.0 550.0 L75.0 660.0" stroke="#d8c4bf" stroke-width="10.4"/>
<path d="M540.0 0.0 L568.0 22.0" stroke="#d8c4bf" stroke-width="10.4"/>
<path d="M630.0 0.0 L660.0 30.0 L700.0 40.0" stroke="#d8c4bf" stroke-width="10.4"/>
<path d="M0.0 235.0 L30.0 232.0" stroke="#d8c4bf" stroke-width="10.4"/>
<path d="M928.0 18.0 L855.0 139.0 L797.0 220.0" stroke="#d8c4bf" stroke-width="10.4"/>
<path d="M870.0 0.0 L928.0 29.0 L991.0 73.0 L1038.0 147.0 L1079.0 198.0" stroke="#d8c4bf" stroke-width="10.4"/>
<path d="M1101.0 213.0 L1200.0 200.0 L1346.0 187.0" stroke="#d8c4bf" stroke-width="10.4"/>
<path d="M990.0 0.0 L1010.0 40.0 L991.0 73.0" stroke="#d8c4bf" stroke-width="10.4"/>
<path d="M1149.0 426.0 L1208.0 331.0 L1320.0 404.0 L1350.0 388.0" stroke="#d8c4bf" stroke-width="9.4"/>
<path d="M1262.0 366.0 L1300.0 305.0 L1345.0 290.0" stroke="#d8c4bf" stroke-width="8.4"/>
<path d="M1021.0 1267.0 L1045.0 1305.0 L1071.0 1347.0 L1090.0 1390.0 L1104.0 1430.0 L1118.0 1470.0" stroke="#d8c4bf" stroke-width="9.4"/>
<path d="M932.0 1309.0 L1126.0 1216.0 L1150.0 1201.0 L1323.0 1130.5 L1350.0 1117.0" stroke="#d8c4bf" stroke-width="10.4"/>
<path d="M1338.0 1125.0 L1288.0 1242.0 L1253.0 1301.0" stroke="#d8c4bf" stroke-width="10.4"/>
<path d="M1163.0 1270.0 L1194.0 1277.0 L1253.0 1304.0" stroke="#d8c4bf" stroke-width="10.4"/>
<path d="M1288.0 1248.0 L1350.0 1273.0" stroke="#d8c4bf" stroke-width="10.4"/>
<path d="M1089.0 1381.0 L1150.0 1352.0" stroke="#d8c4bf" stroke-width="10.4"/>
<path d="M870.0 1176.0 L906.0 1256.0 L932.0 1330.0 L954.0 1421.0" stroke="#d8c4bf" stroke-width="10.4"/>
<path d="M903.0 1322.0 L921.0 1373.0 L940.0 1420.0" stroke="#d8c4bf" stroke-width="10.4"/>
<path d="M811.0 1205.0 L818.0 1330.0 L811.0 1425.0" stroke="#d8c4bf" stroke-width="10.4"/>
<path d="M811.0 1440.0 L808.0 1501.0" stroke="#d8c4bf" stroke-width="10.4"/>
<path d="M690.0 1256.0 L705.0 1330.0 L712.0 1400.0" stroke="#d8c4bf" stroke-width="10.4"/>
<path d="M712.0 1415.0 L705.0 1501.0" stroke="#d8c4bf" stroke-width="10.4"/>
<path d="M888.0 1494.0 L980.0 1480.0 L1071.0 1476.0 L1110.0 1480.0" stroke="#d8c4bf" stroke-width="10.4"/>
<path d="M705.0 1304.0 L815.0 1289.0 L884.0 1278.0" stroke="#d8c4bf" stroke-width="10.4"/>
<path d="M1206.0 1000.0 L1260.0 1020.0 L1345.0 1060.0" stroke="#d8c4bf" stroke-width="10.4"/>
<path d="M1294.0 1392.0 L1270.0 1448.0 L1350.0 1485.0" stroke="#d8c4bf" stroke-width="10.4"/>
<path d="M640.0 1420.0 L650.0 1501.0" stroke="#d8c4bf" stroke-width="10.4"/>
<path d="M1280.0 640.0 L1262.0 720.0 L1232.0 800.0 L1215.0 860.0" stroke="#d8c4bf" stroke-width="10.4"/>
<path d="M1232.0 800.0 L1300.0 830.0 L1345.0 850.0" stroke="#d8c4bf" stroke-width="10.4"/>
<path d="M1262.0 720.0 L1345.0 745.0" stroke="#d8c4bf" stroke-width="10.4"/>
<path d="M1295.0 560.0 L1280.0 640.0" stroke="#d8c4bf" stroke-width="10.4"/>
<path d="M1215.0 860.0 L1345.0 915.0" stroke="#d8c4bf" stroke-width="10.4"/>
<path d="M88.0 1290.0 L158.0 1378.0 L281.0 1343.0" stroke="#d8c4bf" stroke-width="7.4"/>
<path d="M0.0 1395.0 L40.0 1385.0 L75.0 1372.0" stroke="#d8c4bf" stroke-width="7.4"/>
<path d="M92.0 968.0 L45.0 1000.0 L0.0 1022.0" stroke="#d8c4bf" stroke-width="10.4"/>
<path d="M48.0 1000.0 L78.0 1095.0" stroke="#d8c4bf" stroke-width="8.4"/>
<path d="M75.0 660.0 L100.0 690.0" stroke="#d8c4bf" stroke-width="10.4"/>
<path d="M103.0 753.0 L147.0 705.0 L183.0 683.0" stroke="#d8c4bf" stroke-width="10.4"/>
<path d="M374.0 698.0 L440.0 689.0 L513.0 700.0 L579.0 724.0 L640.0 770.0" stroke="#d8c4bf" stroke-width="10.4"/>
<path d="M542.0 621.0 L524.0 661.0 L513.0 694.0" stroke="#d8c4bf" stroke-width="10.4"/>
<path d="M513.0 727.0 L440.0 793.0 L366.0 830.0" stroke="#d8c4bf" stroke-width="10.4"/>
<path d="M278.0 577.0 L330.0 579.0 L396.0 584.0 L458.0 559.0" stroke="#d8c4bf" stroke-width="10.4"/>
<path d="M600.0 398.0 L661.0 423.0 L736.0 462.0 L800.0 492.0 L867.0 526.0" stroke="#d8c4bf" stroke-width="10.4"/>
<path d="M752.0 438.0 L903.0 368.0 L958.0 341.0" stroke="#d8c4bf" stroke-width="10.4"/>
<path d="M843.0 395.0 L800.0 498.0 L746.0 611.0" stroke="#d8c4bf" stroke-width="10.4"/>
<path d="M682.0 298.0 L664.0 389.0 L645.0 474.0 L625.0 560.0" stroke="#d8c4bf" stroke-width="10.4"/>
<path d="M949.0 462.0 L1040.0 532.0 L1134.0 586.0 L1158.0 599.0" stroke="#d8c4bf" stroke-width="10.4"/>
<path d="M888.0 541.0 L943.0 574.0 L991.0 504.0" stroke="#d8c4bf" stroke-width="10.4"/>
<path d="M858.0 598.0 L903.0 623.0 L964.0 650.0" stroke="#d8c4bf" stroke-width="10.4"/>
<path d="M1073.0 477.0 L1040.0 532.0 L988.0 614.0 L964.0 650.0" stroke="#d8c4bf" stroke-width="10.4"/>
<path d="M245.0 1015.0 L330.0 975.0 L380.0 950.0" stroke="#d8c4bf" stroke-width="10.4"/>
<path d="M300.0 930.0 L330.0 975.0 L352.0 1040.0" stroke="#d8c4bf" stroke-width="10.4"/>
<path d="M350.0 1290.0 L440.0 1230.0 L520.0 1170.0 L560.0 1141.0" stroke="#d8c4bf" stroke-width="10.4"/>
<path d="M480.0 1200.0 L510.0 1260.0 L540.0 1330.0" stroke="#d8c4bf" stroke-width="10.4"/>
<path d="M620.0 1090.0 L660.0 1160.0 L690.0 1256.0" stroke="#d8c4bf" stroke-width="10.4"/>
<path d="M1075.0 960.0 L1120.0 1000.0 L1200.0 1030.0" stroke="#d8c4bf" stroke-width="10.4"/>
<path d="M120.0 1100.0 L160.0 1190.0 L180.0 1240.0" stroke="#d8c4bf" stroke-width="10.4"/>
<path d="M1840.0 924.0 L1920.0 987.0" stroke="#d8c4bf" stroke-width="10.4"/>
<path d="M1840.0 1130.0 L1920.0 1131.0" stroke="#d8c4bf" stroke-width="10.4"/>
<path d="M1840.0 1240.0 L1920.0 1243.0" stroke="#d8c4bf" stroke-width="10.4"/>
<path d="M1840.0 1268.0 L1920.0 1270.0" stroke="#d8c4bf" stroke-width="10.4"/>
<path d="M1840.0 1466.0 L1920.0 1470.0" stroke="#d8c4bf" stroke-width="10.4"/>
<path d="M1895.0 800.0 L1878.0 860.0 L1870.0 905.0 L1912.0 935.0" stroke="#d8c4bf" stroke-width="8.4"/>
<path d="M216.0 0.0 L190.0 40.0 L176.0 81.0" stroke="#d8c4bf" stroke-width="10.4"/>
<path d="M0.0 172.0 L143.0 169.0 L282.0 161.0 L399.0 187.0 L542.0 216.0 L619.0 229.0 L700.0 245.0 L760.0 268.0 L782.0 298.0 L873.0 335.0 L949.0 368.0" stroke="#ffffff" stroke-width="8.0" stroke-linecap="round"/>
<path d="M11.0 176.0 L51.0 308.0" stroke="#ffffff" stroke-width="8.0" stroke-linecap="round"/>
<path d="M97.0 176.0 L136.0 279.0 L176.0 377.0 L196.0 430.0" stroke="#ffffff" stroke-width="8.0" stroke-linecap="round"/>
<path d="M0.0 322.0 L48.0 304.0 L136.0 279.0 L238.0 253.0 L290.0 246.0" stroke="#ffffff" stroke-width="8.0" stroke-linecap="round"/>
<path d="M275.0 161.0 L282.0 227.0 L290.0 300.0 L300.0 330.0" stroke="#ffffff" stroke-width="8.0" stroke-linecap="round"/>
<path d="M436.0 0.0 L414.0 110.0 L399.0 187.0 L366.0 300.0 L344.0 370.0 L326.0 440.0" stroke="#ffffff" stroke-width="8.0" stroke-linecap="round"/>
<path d="M290.0 271.0 L366.0 297.0 L487.0 337.0 L557.0 361.0 L600.0 375.0" stroke="#ffffff" stroke-width="8.0" stroke-linecap="round"/>
<path d="M290.0 308.0 L352.0 337.0 L473.0 388.0 L560.0 425.0" stroke="#ffffff" stroke-width="8.0" stroke-linecap="round"/>
<path d="M524.0 216.0 L506.0 275.0 L476.0 337.0" stroke="#ffffff" stroke-width="8.0" stroke-linecap="round"/>
<path d="M37.0 319.0 L176.0 377.0 L304.0 436.0" stroke="#ffffff" stroke-width="8.0" stroke-linecap="round"/>
<path d="M0.0 396.0 L121.0 465.0 L256.0 528.0 L275.0 535.0" stroke="#ffffff" stroke-width="8.0" stroke-linecap="round"/>
<path d="M645.0 190.0 L619.0 235.0 L594.0 293.0 L572.0 341.0 L545.0 400.0 L520.0 450.0" stroke="#ffffff" stroke-width="8.0" stroke-linecap="round"/>
<path d="M645.0 235.0 L634.0 293.0 L623.0 330.0 L610.0 400.0" stroke="#ffffff" stroke-width="8.0" stroke-linecap="round"/>
<path d="M568.0 22.0 L524.0 121.0" stroke="#ffffff" stroke-width="8.0" stroke-linecap="round"/>
<path d="M619.0 51.0 L579.0 143.0" stroke="#ffffff" stroke-width="8.0" stroke-linecap="round"/>
<path d="M568.0 22.0 L693.0 79.0" stroke="#ffffff" stroke-width="8.0" stroke-linecap="round"/>
<path d="M432.0 0.0 L524.0 103.0" stroke="#ffffff" stroke-width="8.0" stroke-linecap="round"/>
<path d="M0.0 400.0 L40.0 550.0 L75.0 660.0" stroke="#ffffff" stroke-width="8.0" stroke-linecap="round"/>
<path d="M540.0 0.0 L568.0 22.0" stroke="#ffffff" stroke-width="8.0" stroke-linecap="round"/>
<path d="M630.0 0.0 L660.0 30.0 L700.0 40.0" stroke="#ffffff" stroke-width="8.0" stroke-linecap="round"/>
<path d="M0.0 235.0 L30.0 232.0" stroke="#ffffff" stroke-width="8.0" stroke-linecap="round"/>
<path d="M928.0 18.0 L855.0 139.0 L797.0 220.0" stroke="#ffffff" stroke-width="8.0" stroke-linecap="round"/>
<path d="M870.0 0.0 L928.0 29.0 L991.0 73.0 L1038.0 147.0 L1079.0 198.0" stroke="#ffffff" stroke-width="8.0" stroke-linecap="round"/>
<path d="M1101.0 213.0 L1200.0 200.0 L1346.0 187.0" stroke="#ffffff" stroke-width="8.0" stroke-linecap="round"/>
<path d="M990.0 0.0 L1010.0 40.0 L991.0 73.0" stroke="#ffffff" stroke-width="8.0" stroke-linecap="round"/>
<path d="M1149.0 426.0 L1208.0 331.0 L1320.0 404.0 L1350.0 388.0" stroke="#ffffff" stroke-width="7.0" stroke-linecap="round"/>
<path d="M1262.0 366.0 L1300.0 305.0 L1345.0 290.0" stroke="#ffffff" stroke-width="6.0" stroke-linecap="round"/>
<path d="M1021.0 1267.0 L1045.0 1305.0 L1071.0 1347.0 L1090.0 1390.0 L1104.0 1430.0 L1118.0 1470.0" stroke="#ffffff" stroke-width="7.0" stroke-linecap="round"/>
<path d="M932.0 1309.0 L1126.0 1216.0 L1150.0 1201.0 L1323.0 1130.5 L1350.0 1117.0" stroke="#ffffff" stroke-width="8.0" stroke-linecap="round"/>
<path d="M1338.0 1125.0 L1288.0 1242.0 L1253.0 1301.0" stroke="#ffffff" stroke-width="8.0" stroke-linecap="round"/>
<path d="M1163.0 1270.0 L1194.0 1277.0 L1253.0 1304.0" stroke="#ffffff" stroke-width="8.0" stroke-linecap="round"/>
<path d="M1288.0 1248.0 L1350.0 1273.0" stroke="#ffffff" stroke-width="8.0" stroke-linecap="round"/>
<path d="M1089.0 1381.0 L1150.0 1352.0" stroke="#ffffff" stroke-width="8.0" stroke-linecap="round"/>
<path d="M870.0 1176.0 L906.0 1256.0 L932.0 1330.0 L954.0 1421.0" stroke="#ffffff" stroke-width="8.0" stroke-linecap="round"/>
<path d="M903.0 1322.0 L921.0 1373.0 L940.0 1420.0" stroke="#ffffff" stroke-width="8.0" stroke-linecap="round"/>
<path d="M811.0 1205.0 L818.0 1330.0 L811.0 1425.0" stroke="#ffffff" stroke-width="8.0" stroke-linecap="round"/>
<path d="M811.0 1440.0 L808.0 1501.0" stroke="#ffffff" stroke-width="8.0" stroke-linecap="round"/>
<path d="M690.0 1256.0 L705.0 1330.0 L712.0 1400.0" stroke="#ffffff" stroke-width="8.0" stroke-linecap="round"/>
<path d="M712.0 1415.0 L705.0 1501.0" stroke="#ffffff" stroke-width="8.0" stroke-linecap="round"/>
<path d="M888.0 1494.0 L980.0 1480.0 L1071.0 1476.0 L1110.0 1480.0" stroke="#ffffff" stroke-width="8.0" stroke-linecap="round"/>
<path d="M705.0 1304.0 L815.0 1289.0 L884.0 1278.0" stroke="#ffffff" stroke-width="8.0" stroke-linecap="round"/>
<path d="M1206.0 1000.0 L1260.0 1020.0 L1345.0 1060.0" stroke="#ffffff" stroke-width="8.0" stroke-linecap="round"/>
<path d="M1294.0 1392.0 L1270.0 1448.0 L1350.0 1485.0" stroke="#ffffff" stroke-width="8.0" stroke-linecap="round"/>
<path d="M640.0 1420.0 L650.0 1501.0" stroke="#ffffff" stroke-width="8.0" stroke-linecap="round"/>
<path d="M1280.0 640.0 L1262.0 720.0 L1232.0 800.0 L1215.0 860.0" stroke="#ffffff" stroke-width="8.0" stroke-linecap="round"/>
<path d="M1232.0 800.0 L1300.0 830.0 L1345.0 850.0" stroke="#ffffff" stroke-width="8.0" stroke-linecap="round"/>
<path d="M1262.0 720.0 L1345.0 745.0" stroke="#ffffff" stroke-width="8.0" stroke-linecap="round"/>
<path d="M1295.0 560.0 L1280.0 640.0" stroke="#ffffff" stroke-width="8.0" stroke-linecap="round"/>
<path d="M1215.0 860.0 L1345.0 915.0" stroke="#ffffff" stroke-width="8.0" stroke-linecap="round"/>
<path d="M88.0 1290.0 L158.0 1378.0 L281.0 1343.0" stroke="#ffffff" stroke-width="5.0" stroke-linecap="round"/>
<path d="M0.0 1395.0 L40.0 1385.0 L75.0 1372.0" stroke="#ffffff" stroke-width="5.0" stroke-linecap="round"/>
<path d="M92.0 968.0 L45.0 1000.0 L0.0 1022.0" stroke="#ffffff" stroke-width="8.0" stroke-linecap="round"/>
<path d="M48.0 1000.0 L78.0 1095.0" stroke="#ffffff" stroke-width="6.0" stroke-linecap="round"/>
<path d="M75.0 660.0 L100.0 690.0" stroke="#ffffff" stroke-width="8.0" stroke-linecap="round"/>
<path d="M103.0 753.0 L147.0 705.0 L183.0 683.0" stroke="#ffffff" stroke-width="8.0" stroke-linecap="round"/>
<path d="M374.0 698.0 L440.0 689.0 L513.0 700.0 L579.0 724.0 L640.0 770.0" stroke="#ffffff" stroke-width="8.0" stroke-linecap="round"/>
<path d="M542.0 621.0 L524.0 661.0 L513.0 694.0" stroke="#ffffff" stroke-width="8.0" stroke-linecap="round"/>
<path d="M513.0 727.0 L440.0 793.0 L366.0 830.0" stroke="#ffffff" stroke-width="8.0" stroke-linecap="round"/>
<path d="M278.0 577.0 L330.0 579.0 L396.0 584.0 L458.0 559.0" stroke="#ffffff" stroke-width="8.0" stroke-linecap="round"/>
<path d="M600.0 398.0 L661.0 423.0 L736.0 462.0 L800.0 492.0 L867.0 526.0" stroke="#ffffff" stroke-width="8.0" stroke-linecap="round"/>
<path d="M752.0 438.0 L903.0 368.0 L958.0 341.0" stroke="#ffffff" stroke-width="8.0" stroke-linecap="round"/>
<path d="M843.0 395.0 L800.0 498.0 L746.0 611.0" stroke="#ffffff" stroke-width="8.0" stroke-linecap="round"/>
<path d="M682.0 298.0 L664.0 389.0 L645.0 474.0 L625.0 560.0" stroke="#ffffff" stroke-width="8.0" stroke-linecap="round"/>
<path d="M949.0 462.0 L1040.0 532.0 L1134.0 586.0 L1158.0 599.0" stroke="#ffffff" stroke-width="8.0" stroke-linecap="round"/>
<path d="M888.0 541.0 L943.0 574.0 L991.0 504.0" stroke="#ffffff" stroke-width="8.0" stroke-linecap="round"/>
<path d="M858.0 598.0 L903.0 623.0 L964.0 650.0" stroke="#ffffff" stroke-width="8.0" stroke-linecap="round"/>
<path d="M1073.0 477.0 L1040.0 532.0 L988.0 614.0 L964.0 650.0" stroke="#ffffff" stroke-width="8.0" stroke-linecap="round"/>
<path d="M245.0 1015.0 L330.0 975.0 L380.0 950.0" stroke="#ffffff" stroke-width="8.0" stroke-linecap="round"/>
<path d="M300.0 930.0 L330.0 975.0 L352.0 1040.0" stroke="#ffffff" stroke-width="8.0" stroke-linecap="round"/>
<path d="M350.0 1290.0 L440.0 1230.0 L520.0 1170.0 L560.0 1141.0" stroke="#ffffff" stroke-width="8.0" stroke-linecap="round"/>
<path d="M480.0 1200.0 L510.0 1260.0 L540.0 1330.0" stroke="#ffffff" stroke-width="8.0" stroke-linecap="round"/>
<path d="M620.0 1090.0 L660.0 1160.0 L690.0 1256.0" stroke="#ffffff" stroke-width="8.0" stroke-linecap="round"/>
<path d="M1075.0 960.0 L1120.0 1000.0 L1200.0 1030.0" stroke="#ffffff" stroke-width="8.0" stroke-linecap="round"/>
<path d="M120.0 1100.0 L160.0 1190.0 L180.0 1240.0" stroke="#ffffff" stroke-width="8.0" stroke-linecap="round"/>
<path d="M1840.0 924.0 L1920.0 987.0" stroke="#ffffff" stroke-width="8.0" stroke-linecap="round"/>
<path d="M1840.0 1130.0 L1920.0 1131.0" stroke="#ffffff" stroke-width="8.0" stroke-linecap="round"/>
<path d="M1840.0 1240.0 L1920.0 1243.0" stroke="#ffffff" stroke-width="8.0" stroke-linecap="round"/>
<path d="M1840.0 1268.0 L1920.0 1270.0" stroke="#ffffff" stroke-width="8.0" stroke-linecap="round"/>
<path d="M1840.0 1466.0 L1920.0 1470.0" stroke="#ffffff" stroke-width="8.0" stroke-linecap="round"/>
<path d="M1895.0 800.0 L1878.0 860.0 L1870.0 905.0 L1912.0 935.0" stroke="#ffffff" stroke-width="6.0" stroke-linecap="round"/>
<path d="M216.0 0.0 L190.0 40.0 L176.0 81.0" stroke="#ffffff" stroke-width="8.0" stroke-linecap="round"/>
</g>
<g fill="none" stroke-linejoin="round" stroke-linecap="butt">
<path d="M560.0 1141.0 L680.0 1072.0 L790.0 1010.0" stroke="#b9b9c6" stroke-width="19.6"/>
<path d="M227.0 804.0 L256.0 866.0 L352.0 976.0 L366.0 1006.0" stroke="#b9b9c6" stroke-width="15.6"/>
<path d="M560.0 1141.0 L680.0 1072.0 L790.0 1010.0" stroke="#dddde8" stroke-width="18.0" stroke-linecap="round"/>
<path d="M227.0 804.0 L256.0 866.0 L352.0 976.0 L366.0 1006.0" stroke="#dddde8" stroke-width="14.0" stroke-linecap="round"/>
</g>
<g fill="none" stroke-linejoin="round" stroke-linecap="butt">
<path d="M1843.0 490.0 L1852.0 560.0 L1856.0 600.0 L1849.0 630.0 L1838.0 650.0" stroke="#a8ad5a" stroke-width="14.0"/>
<path d="M176.0 92.0 L190.0 147.0 L220.0 205.0 L253.0 278.0 L278.0 330.0 L300.0 396.0 L311.0 456.0" stroke="#a8ad5a" stroke-width="14.0"/>
<path d="M311.0 456.0 L341.0 450.0 L400.0 500.0 L460.0 547.0 L550.0 584.0 L600.0 617.0 L655.0 630.0 L685.0 635.0 L782.0 633.0" stroke="#a8ad5a" stroke-width="14.0"/>
<path d="M311.0 456.0 L304.0 484.0 L288.0 531.0 L272.0 594.0 L253.0 641.0 L241.0 672.0 L253.0 683.0 L311.0 727.0 L322.0 764.0 L352.0 800.0 L363.0 830.0" stroke="#a8ad5a" stroke-width="13.0"/>
<path d="M363.0 830.0 L293.0 866.0 L165.0 951.0 L147.0 932.0 L128.0 866.0 L121.0 811.0" stroke="#a8ad5a" stroke-width="13.0"/>
<path d="M0.0 667.0 L92.0 672.0 L154.0 680.0 L241.0 676.0" stroke="#a8ad5a" stroke-width="13.0"/>
<path d="M22.0 698.0 L62.0 727.0 L99.0 757.0 L110.0 793.0" stroke="#a8ad5a" stroke-width="12.0"/>
<path d="M661.0 158.0 L687.0 227.0 L706.0 295.0 L727.0 356.0 L749.0 426.0 L743.0 450.0 L715.0 517.0 L679.0 583.0 L655.0 629.0" stroke="#a8ad5a" stroke-width="15.0"/>
<path d="M-5.0 1453.0 L72.5 1421.6 L136.0 1382.0 L149.0 1382.0 L169.0 1408.5 L182.0 1408.5 L237.0 1362.0 L248.0 1366.7 L263.6 1395.0 L325.0 1465.6 L358.0 1505.0" stroke="#a8ad5a" stroke-width="14.0"/>
<path d="M1843.0 490.0 L1852.0 560.0 L1856.0 600.0 L1849.0 630.0 L1838.0 650.0" stroke="#f7fabf" stroke-width="12.0" stroke-linecap="round"/>
<path d="M176.0 92.0 L190.0 147.0 L220.0 205.0 L253.0 278.0 L278.0 330.0 L300.0 396.0 L311.0 456.0" stroke="#f7fabf" stroke-width="12.0" stroke-linecap="round"/>
<path d="M311.0 456.0 L341.0 450.0 L400.0 500.0 L460.0 547.0 L550.0 584.0 L600.0 617.0 L655.0 630.0 L685.0 635.0 L782.0 633.0" stroke="#f7fabf" stroke-width="12.0" stroke-linecap="round"/>
<path d="M311.0 456.0 L304.0 484.0 L288.0 531.0 L272.0 594.0 L253.0 641.0 L241.0 672.0 L253.0 683.0 L311.0 727.0 L322.0 764.0 L352.0 800.0 L363.0 830.0" stroke="#f7fabf" stroke-width="11.0" stroke-linecap="round"/>
<path d="M363.0 830.0 L293.0 866.0 L165.0 951.0 L147.0 932.0 L128.0 866.0 L121.0 811.0" stroke="#f7fabf" stroke-width="11.0" stroke-linecap="round"/>
<path d="M0.0 667.0 L92.0 672.0 L154.0 680.0 L241.0 676.0" stroke="#f7fabf" stroke-width="11.0" stroke-linecap="round"/>
<path d="M22.0 698.0 L62.0 727.0 L99.0 757.0 L110.0 793.0" stroke="#f7fabf" stroke-width="10.0" stroke-linecap="round"/>
<path d="M661.0 158.0 L687.0 227.0 L706.0 295.0 L727.0 356.0 L749.0 426.0 L743.0 450.0 L715.0 517.0 L679.0 583.0 L655.0 629.0" stroke="#f7fabf" stroke-width="13.0" stroke-linecap="round"/>
<path d="M-5.0 1453.0 L72.5 1421.6 L136.0 1382.0 L149.0 1382.0 L169.0 1408.5 L182.0 1408.5 L237.0 1362.0 L248.0 1366.7 L263.6 1395.0 L325.0 1465.6 L358.0 1505.0" stroke="#f7fabf" stroke-width="12.0" stroke-linecap="round"/>
</g>
<g fill="none" stroke-linejoin="round" stroke-linecap="butt">
<path d="M0.0 110.0 L73.0 101.0 L176.0 92.0 L235.0 79.0 L300.0 79.0 L366.0 95.0 L414.0 110.0 L550.0 150.0 L645.0 183.0 L723.0 203.0 L797.0 231.0 L906.0 282.0 L972.0 315.0 L1013.0 341.0" stroke="#b98a3a" stroke-width="23.0"/>
<path d="M121.0 0.0 L147.0 40.0 L172.0 82.0" stroke="#b98a3a" stroke-width="16.0"/>
<path d="M740.0 0.0 L700.0 62.0 L672.0 130.0 L655.0 183.0" stroke="#b98a3a" stroke-width="20.0"/>
<path d="M366.0 1006.0 L381.0 1029.0 L440.0 1100.0 L500.0 1170.0 L586.0 1253.0" stroke="#b98a3a" stroke-width="22.0"/>
<path d="M577.0 1395.0 L640.0 1396.0 L701.0 1398.0 L745.0 1408.0 L815.0 1427.0 L870.0 1436.0 L943.0 1429.0 L1016.0 1421.0 L1071.0 1432.0 L1137.0 1449.0 L1163.0 1456.0 L1236.0 1478.0 L1345.0 1510.0" stroke="#b98a3a" stroke-width="23.0"/>
<path d="M989.0 952.0 L1036.0 1021.0 L1080.0 1087.0 L1110.0 1146.0 L1124.0 1192.0 L1139.0 1234.0 L1152.0 1293.0 L1159.0 1366.0 L1157.0 1439.0 L1152.0 1510.0" stroke="#b98a3a" stroke-width="24.0"/>
<path d="M0.0 110.0 L73.0 101.0 L176.0 92.0 L235.0 79.0 L300.0 79.0 L366.0 95.0 L414.0 110.0 L550.0 150.0 L645.0 183.0 L723.0 203.0 L797.0 231.0 L906.0 282.0 L972.0 315.0 L1013.0 341.0" stroke="#fcd6a4" stroke-width="21.0" stroke-linecap="round"/>
<path d="M121.0 0.0 L147.0 40.0 L172.0 82.0" stroke="#fcd6a4" stroke-width="14.0" stroke-linecap="round"/>
<path d="M740.0 0.0 L700.0 62.0 L672.0 130.0 L655.0 183.0" stroke="#fcd6a4" stroke-width="18.0" stroke-linecap="round"/>
<path d="M366.0 1006.0 L381.0 1029.0 L440.0 1100.0 L500.0 1170.0 L586.0 1253.0" stroke="#fcd6a4" stroke-width="20.0" stroke-linecap="round"/>
<path d="M577.0 1395.0 L640.0 1396.0 L701.0 1398.0 L745.0 1408.0 L815.0 1427.0 L870.0 1436.0 L943.0 1429.0 L1016.0 1421.0 L1071.0 1432.0 L1137.0 1449.0 L1163.0 1456.0 L1236.0 1478.0 L1345.0 1510.0" stroke="#fcd6a4" stroke-width="21.0" stroke-linecap="round"/>
<path d="M989.0 952.0 L1036.0 1021.0 L1080.0 1087.0 L1110.0 1146.0 L1124.0 1192.0 L1139.0 1234.0 L1152.0 1293.0 L1159.0 1366.0 L1157.0 1439.0 L1152.0 1510.0" stroke="#fcd6a4" stroke-width="22.0" stroke-linecap="round"/>
</g>
<g fill="none" stroke-linejoin="round" stroke-linecap="butt">
<path d="M1206.0 -10.0 L1163.0 81.0 L1108.0 172.0 L1053.0 264.0 L1013.0 341.0" stroke="#dc5a7a" stroke-width="28.0"/>
<path d="M1013.0 341.0 L1040.0 360.0 L1090.0 396.0 L1163.0 452.0 L1244.0 510.0 L1310.0 552.0 L1360.0 582.0" stroke="#dc5a7a" stroke-width="47.0"/>
<path d="M1013.0 341.0 L979.0 380.0 L903.0 498.0 L812.0 623.0 L756.0 695.0 L700.0 760.0 L623.0 816.0 L518.0 898.0 L455.0 948.0 L393.0 998.0 L329.5 1055.0 L256.0 1110.0 L183.0 1161.0 L110.0 1205.0 L62.0 1234.0 L30.0 1245.0 L-5.0 1249.0" stroke="#dc5a7a" stroke-width="28.0"/>
<path d="M1360.0 455.0 L1286.0 506.0 L1229.0 550.0 L1180.0 625.0" stroke="#dc5a7a" stroke-width="42.0"/>
<path d="M1180.0 625.0 L1124.0 726.0 L1080.0 792.0 L1049.0 835.0" stroke="#dc5a7a" stroke-width="50.0"/>
<path d="M1188.0 640.0 L1166.0 700.0 L1128.0 752.0 L1098.0 798.0" stroke="#dc5a7a" stroke-width="32.0"/>
<path d="M1049.0 835.0 L1100.0 862.0 L1209.0 907.0 L1350.0 969.0" stroke="#dc5a7a" stroke-width="46.0"/>
<path d="M1049.0 835.0 L1000.0 940.0 L951.0 1000.0 L905.0 1028.0 L859.0 1059.0 L813.0 1093.0 L743.0 1150.0 L698.0 1188.0 L640.0 1230.0 L594.0 1262.0" stroke="#dc5a7a" stroke-width="35.0"/>
<path d="M590.0 1262.0 L604.0 1300.0 L611.0 1336.0 L597.0 1373.0 L575.0 1399.0 L540.0 1440.0 L490.0 1510.0" stroke="#dc5a7a" stroke-width="28.0"/>
<path d="M1840.0 715.0 L1920.0 717.0" stroke="#dc5a7a" stroke-width="34.0"/>
<path d="M1840.0 1192.0 L1920.0 1202.0" stroke="#dc5a7a" stroke-width="38.0"/>
<path d="M1206.0 -10.0 L1163.0 81.0 L1108.0 172.0 L1053.0 264.0 L1013.0 341.0" stroke="#e892a2" stroke-width="26.0" stroke-linecap="round"/>
<path d="M1013.0 341.0 L1040.0 360.0 L1090.0 396.0 L1163.0 452.0 L1244.0 510.0 L1310.0 552.0 L1360.0 582.0" stroke="#e892a2" stroke-width="45.0" stroke-linecap="round"/>
<path d="M1013.0 341.0 L979.0 380.0 L903.0 498.0 L812.0 623.0 L756.0 695.0 L700.0 760.0 L623.0 816.0 L518.0 898.0 L455.0 948.0 L393.0 998.0 L329.5 1055.0 L256.0 1110.0 L183.0 1161.0 L110.0 1205.0 L62.0 1234.0 L30.0 1245.0 L-5.0 1249.0" stroke="#e892a2" stroke-width="26.0" stroke-linecap="round"/>
<path d="M1360.0 455.0 L1286.0 506.0 L1229.0 550.0 L1180.0 625.0" stroke="#e892a2" stroke-width="40.0" stroke-linecap="round"/>
<path d="M1180.0 625.0 L1124.0 726.0 L1080.0 792.0 L1049.0 835.0" stroke="#e892a2" stroke-width="48.0" stroke-linecap="round"/>
<path d="M1188.0 640.0 L1166.0 700.0 L1128.0 752.0 L1098.0 798.0" stroke="#e892a2" stroke-width="30.0" stroke-linecap="round"/>
<path d="M1049.0 835.0 L1100.0 862.0 L1209.0 907.0 L1350.0 969.0" stroke="#e892a2" stroke-width="44.0" stroke-linecap="round"/>
<path d="M1049.0 835.0 L1000.0 940.0 L951.0 1000.0 L905.0 1028.0 L859.0 1059.0 L813.0 1093.0 L743.0 1150.0 L698.0 1188.0 L640.0 1230.0 L594.0 1262.0" stroke="#e892a2" stroke-width="33.0" stroke-linecap="round"/>
<path d="M590.0 1262.0 L604.0 1300.0 L611.0 1336.0 L597.0 1373.0 L575.0 1399.0 L540.0 1440.0 L490.0 1510.0" stroke="#e892a2" stroke-width="26.0" stroke-linecap="round"/>
<path d="M1840.0 715.0 L1920.0 717.0" stroke="#e892a2" stroke-width="32.0" stroke-linecap="round"/>
<path d="M1840.0 1192.0 L1920.0 1202.0" stroke="#e892a2" stroke-width="36.0" stroke-linecap="round"/>
</g>
<path d="M1050.0 367.0 L1090.0 396.0 L1163.0 452.0 L1230.0 500.0" fill="none" stroke="#cdebb0" stroke-width="13"/>
<path d="M1230.0 500.0 L1244.0 510.0 L1310.0 552.0 L1360.0 582.0" fill="none" stroke="#e6e2dc" stroke-width="8"/>
<path d="M1215.0 905.0 L1350.0 965.0" fill="none" stroke="#e6e2dc" stroke-width="5"/>
<path d="M1360.0 455.0 L1286.0 506.0 L1229.0 550.0 L1185.0 620.0" fill="none" stroke="#e6e2dc" stroke-width="6"/>
<path d="M1840.0 1185.0 L1920.0 1198.0" fill="none" stroke="#e6e2dc" stroke-width="5"/>
<path d="M1206.0 -10.0 L1163.0 81.0 L1108.0 172.0 L1053.0 264.0 L1013.0 341.0 L979.0 380.0 L903.0 498.0 L812.0 623.0 L790.0 652.0" fill="none" stroke="#6a6a6a" stroke-width="3" stroke-opacity="0.75"/>
<path d="M1206.0 -10.0 L1163.0 81.0 L1108.0 172.0 L1053.0 264.0 L1013.0 341.0 L979.0 380.0 L903.0 498.0 L812.0 623.0 L790.0 652.0" fill="none" stroke="#cfc9c2" stroke-width="1" stroke-opacity="0.7"/>
<path d="M1013.0 341.0 L1040.0 360.0 L1090.0 396.0 L1163.0 452.0 L1244.0 510.0 L1310.0 552.0 L1360.0 582.0" fill="none" stroke="#6a6a6a" stroke-width="3" stroke-opacity="0.75"/>
<path d="M1013.0 341.0 L1040.0 360.0 L1090.0 396.0 L1163.0 452.0 L1244.0 510.0 L1310.0 552.0 L1360.0 582.0" fill="none" stroke="#cfc9c2" stroke-width="1" stroke-opacity="0.7"/>
<path d="M121.0 0.0 L147.0 40.0 L172.0 82.0 L190.0 147.0 L220.0 205.0 L253.0 278.0 L278.0 330.0 L300.0 396.0 L311.0 456.0 L304.0 484.0 L288.0 531.0 L272.0 594.0 L253.0 641.0 L241.0 672.0" fill="none" stroke="#6a6a6a" stroke-width="3" stroke-opacity="0.75"/>
<path d="M121.0 0.0 L147.0 40.0 L172.0 82.0 L190.0 147.0 L220.0 205.0 L253.0 278.0 L278.0 330.0 L300.0 396.0 L311.0 456.0 L304.0 484.0 L288.0 531.0 L272.0 594.0 L253.0 641.0 L241.0 672.0" fill="none" stroke="#cfc9c2" stroke-width="1" stroke-opacity="0.7"/>
<path d="M216.0 0.0 L190.0 40.0 L176.0 81.0" fill="none" stroke="#6a6a6a" stroke-width="3" stroke-opacity="0.75"/>
<path d="M216.0 0.0 L190.0 40.0 L176.0 81.0" fill="none" stroke="#cfc9c2" stroke-width="1" stroke-opacity="0.7"/>
<path d="M176.0 92.0 L235.0 80.0 L300.0 80.0 L366.0 96.0 L414.0 111.0 L550.0 151.0 L645.0 184.0 L723.0 204.0 L797.0 232.0 L906.0 283.0 L972.0 316.0 L1013.0 341.0" fill="none" stroke="#6a6a6a" stroke-width="3" stroke-opacity="0.75"/>
<path d="M176.0 92.0 L235.0 80.0 L300.0 80.0 L366.0 96.0 L414.0 111.0 L550.0 151.0 L645.0 184.0 L723.0 204.0 L797.0 232.0 L906.0 283.0 L972.0 316.0 L1013.0 341.0" fill="none" stroke="#cfc9c2" stroke-width="1" stroke-opacity="0.7"/>
<path d="M645.0 190.0 L619.0 235.0 L594.0 293.0 L572.0 341.0 L545.0 400.0 L520.0 450.0" fill="none" stroke="#6a6a6a" stroke-width="3" stroke-opacity="0.75"/>
<path d="M645.0 190.0 L619.0 235.0 L594.0 293.0 L572.0 341.0 L545.0 400.0 L520.0 450.0" fill="none" stroke="#cfc9c2" stroke-width="1" stroke-opacity="0.7"/>
<path d="M0.0 667.0 L92.0 672.0 L154.0 680.0 L241.0 676.0" fill="none" stroke="#6a6a6a" stroke-width="3" stroke-opacity="0.75"/>
<path d="M0.0 667.0 L92.0 672.0 L154.0 680.0 L241.0 676.0" fill="none" stroke="#cfc9c2" stroke-width="1" stroke-opacity="0.7"/>
<path d="M241.0 676.0 L227.0 804.0 L256.0 866.0 L352.0 976.0 L366.0 1006.0 L400.0 1000.0 L450.0 950.0" fill="none" stroke="#6a6a6a" stroke-width="3" stroke-opacity="0.75"/>
<path d="M241.0 676.0 L227.0 804.0 L256.0 866.0 L352.0 976.0 L366.0 1006.0 L400.0 1000.0 L450.0 950.0" fill="none" stroke="#cfc9c2" stroke-width="1" stroke-opacity="0.7"/>
<path d="M278.0 577.0 L330.0 579.0 L396.0 584.0 L458.0 559.0" fill="none" stroke="#6a6a6a" stroke-width="3" stroke-opacity="0.75"/>
<path d="M278.0 577.0 L330.0 579.0 L396.0 584.0 L458.0 559.0" fill="none" stroke="#cfc9c2" stroke-width="1" stroke-opacity="0.7"/>
<path d="M1360.0 455.0 L1286.0 506.0 L1229.0 550.0 L1200.0 590.0 L1158.0 601.0 L1100.0 580.0 L1000.0 700.0 L900.0 800.0" fill="none" stroke="#6a6a6a" stroke-width="3" stroke-opacity="0.75"/>
<path d="M1360.0 455.0 L1286.0 506.0 L1229.0 550.0 L1200.0 590.0 L1158.0 601.0 L1100.0 580.0 L1000.0 700.0 L900.0 800.0" fill="none" stroke="#cfc9c2" stroke-width="1" stroke-opacity="0.7"/>
<path d="M1840.0 713.0 L1920.0 721.0" fill="none" stroke="#6a6a6a" stroke-width="3" stroke-opacity="0.75"/>
<path d="M1840.0 713.0 L1920.0 721.0" fill="none" stroke="#cfc9c2" stroke-width="1" stroke-opacity="0.7"/>
<path d="M-5.0 800.0 L114.0 795.0 L220.0 771.0 L311.0 735.0 L403.0 705.0 L476.0 702.0 L550.0 720.0 L623.0 768.0 L696.0 815.0 L736.0 855.0 L787.0 900.0 L835.0 960.0 L882.0 1021.0 L919.0 1058.0 L948.0 1095.0 L974.0 1139.0 L987.0 1185.0 L1004.0 1264.0 L1020.0 1305.0 L1042.0 1347.0 L1063.0 1390.0 L1081.0 1430.0 L1100.0 1476.0 L1112.0 1510.0" fill="none" stroke="#6e6e6e" stroke-width="18.0"/>
<path d="M-5.0 800.0 L114.0 795.0 L220.0 771.0 L311.0 735.0 L403.0 705.0 L476.0 702.0 L550.0 720.0 L623.0 768.0 L696.0 815.0 L736.0 855.0 L787.0 900.0 L835.0 960.0 L882.0 1021.0 L919.0 1058.0 L948.0 1095.0 L974.0 1139.0 L987.0 1185.0 L1004.0 1264.0 L1020.0 1305.0 L1042.0 1347.0 L1063.0 1390.0 L1081.0 1430.0 L1100.0 1476.0 L1112.0 1510.0" fill="none" stroke="#9c9c9c" stroke-width="16.0"/>
<path d="M-5.0 800.0 L114.0 795.0 L220.0 771.0 L311.0 735.0 L403.0 705.0 L476.0 702.0 L550.0 720.0 L623.0 768.0 L696.0 815.0 L736.0 855.0 L787.0 900.0 L835.0 960.0 L882.0 1021.0 L919.0 1058.0 L948.0 1095.0 L974.0 1139.0 L987.0 1185.0 L1004.0 1264.0 L1020.0 1305.0 L1042.0 1347.0 L1063.0 1390.0 L1081.0 1430.0 L1100.0 1476.0 L1112.0 1510.0" fill="none" stroke="#787878" stroke-width="11.2"/>
<path d="M-5.0 800.0 L114.0 795.0 L220.0 771.0 L311.0 735.0 L403.0 705.0 L476.0 702.0 L550.0 720.0 L623.0 768.0 L696.0 815.0 L736.0 855.0 L787.0 900.0 L835.0 960.0 L882.0 1021.0 L919.0 1058.0 L948.0 1095.0 L974.0 1139.0 L987.0 1185.0 L1004.0 1264.0 L1020.0 1305.0 L1042.0 1347.0 L1063.0 1390.0 L1081.0 1430.0 L1100.0 1476.0 L1112.0 1510.0" fill="none" stroke="#d0d0d0" stroke-width="8.3" stroke-dasharray="6 5"/>
<path d="M-5.0 800.0 L114.0 795.0 L220.0 771.0 L311.0 735.0 L403.0 705.0 L476.0 702.0 L550.0 720.0 L623.0 768.0 L696.0 815.0 L736.0 855.0 L787.0 900.0 L835.0 960.0 L882.0 1021.0 L919.0 1058.0 L948.0 1095.0 L974.0 1139.0 L987.0 1185.0 L1004.0 1264.0 L1020.0 1305.0 L1042.0 1347.0 L1063.0 1390.0 L1081.0 1430.0 L1100.0 1476.0 L1112.0 1510.0" fill="none" stroke="#808080" stroke-width="4.0"/>
<g fill="#734a08" transform="translate(210.0 52.0)"><path d="M-7 -3 L0 -7 L7 -3 L7 -1.6 L-7 -1.6Z"/><rect x="-5.6" y="-0.8" width="2.2" height="5"/><rect x="-1.1" y="-0.8" width="2.2" height="5"/><rect x="3.4" y="-0.8" width="2.2" height="5"/><rect x="-7" y="4.8" width="14" height="1.8"/></g>
<g transform="translate(677.0 85.0)"><path d="M-8 -6.5 C-5 -5.2 -3 -5.2 0 -6.5 V0 C0 3 -2 5 -4 5 C-6 5 -8 3 -8 0Z" fill="#734a08"/><path d="M-1 -3 C2 -1.7 4.4 -1.7 7.6 -3 V3.4 C7.6 6.4 5.4 8.2 3.3 8.2 C1.2 8.2 -1 6.4 -1 3.4Z" fill="#734a08" stroke="#f2e9dc" stroke-width="0.9"/><g fill="#f2e9dc"><circle cx="-5.6" cy="-2.4" r="0.9"/><circle cx="-2.4" cy="-2.4" r="0.9"/><circle cx="1.6" cy="1.2" r="0.9"/><circle cx="5" cy="1.2" r="0.9"/><path d="M-5.8 1.6 Q-4 3.4 -2.2 1.6 Z"/><path d="M1.4 5.6 Q3.3 3.6 5.2 5.6 Z"/></g></g>
<g stroke="#ac39ac" fill="none" stroke-width="1.3" transform="translate(248.0 276.0)"><path d="M-7 -5 L-4.6 -5 L-2.6 3 L5.4 3 L7 -3.2 L-4 -3.2"/><path d="M-3.4 -0.8 H6.2 M-1 -3 V3 M1.6 -3 V3 M4.2 -3 V3" stroke-width="0.8"/><circle cx="-1.6" cy="5.4" r="1" fill="#ac39ac"/><circle cx="4.4" cy="5.4" r="1" fill="#ac39ac"/></g>
<g transform="translate(188.0 460.0)"><path d="M-8 -6.5 C-5 -5.2 -3 -5.2 0 -6.5 V0 C0 3 -2 5 -4 5 C-6 5 -8 3 -8 0Z" fill="#734a08"/><path d="M-1 -3 C2 -1.7 4.4 -1.7 7.6 -3 V3.4 C7.6 6.4 5.4 8.2 3.3 8.2 C1.2 8.2 -1 6.4 -1 3.4Z" fill="#734a08" stroke="#f2e9dc" stroke-width="0.9"/><g fill="#f2e9dc"><circle cx="-5.6" cy="-2.4" r="0.9"/><circle cx="-2.4" cy="-2.4" r="0.9"/><circle cx="1.6" cy="1.2" r="0.9"/><circle cx="5" cy="1.2" r="0.9"/><path d="M-5.8 1.6 Q-4 3.4 -2.2 1.6 Z"/><path d="M1.4 5.6 Q3.3 3.6 5.2 5.6 Z"/></g></g>
<path d="M650.0 -4.0 v15 M645.0 0.5 h10" stroke="#111" stroke-width="2" fill="none"/>
<g stroke="#ac39ac" fill="none" stroke-width="1.3" transform="translate(802.0 9.0)"><path d="M-7 -5 L-4.6 -5 L-2.6 3 L5.4 3 L7 -3.2 L-4 -3.2"/><path d="M-3.4 -0.8 H6.2 M-1 -3 V3 M1.6 -3 V3 M4.2 -3 V3" stroke-width="0.8"/><circle cx="-1.6" cy="5.4" r="1" fill="#ac39ac"/><circle cx="4.4" cy="5.4" r="1" fill="#ac39ac"/></g>
<g stroke="#ac39ac" fill="none" stroke-width="1.3" transform="translate(756.0 23.0)"><path d="M-7 -5 L-4.6 -5 L-2.6 3 L5.4 3 L7 -3.2 L-4 -3.2"/><path d="M-3.4 -0.8 H6.2 M-1 -3 V3 M1.6 -3 V3 M4.2 -3 V3" stroke-width="0.8"/><circle cx="-1.6" cy="5.4" r="1" fill="#ac39ac"/><circle cx="4.4" cy="5.4" r="1" fill="#ac39ac"/></g>
<g transform="translate(853.0 114.0)"><rect x="-7" y="-6.5" width="14" height="13" fill="#734a08"/><g fill="#f2e9dc"><rect x="-3.6" y="-5.2" width="7.2" height="4.4"/><rect x="-3.6" y="0.8" width="7.2" height="4.4"/><rect x="-6.2" y="-5.4" width="1.5" height="1.6"/><rect x="-6.2" y="-2.2" width="1.5" height="1.6"/><rect x="-6.2" y="1" width="1.5" height="1.6"/><rect x="-6.2" y="4" width="1.5" height="1.6"/><rect x="4.7" y="-5.4" width="1.5" height="1.6"/><rect x="4.7" y="-2.2" width="1.5" height="1.6"/><rect x="4.7" y="1" width="1.5" height="1.6"/><rect x="4.7" y="4" width="1.5" height="1.6"/></g></g>
<g stroke="#ac39ac" fill="none" stroke-width="1.3" transform="translate(884.0 142.0)"><path d="M-7 -5 L-4.6 -5 L-2.6 3 L5.4 3 L7 -3.2 L-4 -3.2"/><path d="M-3.4 -0.8 H6.2 M-1 -3 V3 M1.6 -3 V3 M4.2 -3 V3" stroke-width="0.8"/><circle cx="-1.6" cy="5.4" r="1" fill="#ac39ac"/><circle cx="4.4" cy="5.4" r="1" fill="#ac39ac"/></g>
<g stroke="#ac39ac" fill="none" stroke-width="1.3" transform="translate(838.0 236.0)"><path d="M-7 -5 L-4.6 -5 L-2.6 3 L5.4 3 L7 -3.2 L-4 -3.2"/><path d="M-3.4 -0.8 H6.2 M-1 -3 V3 M1.6 -3 V3 M4.2 -3 V3" stroke-width="0.8"/><circle cx="-1.6" cy="5.4" r="1" fill="#ac39ac"/><circle cx="4.4" cy="5.4" r="1" fill="#ac39ac"/></g>
<g stroke="#0092da" fill="none" stroke-width="1.8" transform="translate(1082.0 132.0)"><path d="M-7 -4 H7 M-7 -4 l3 -2.4 M-7 -4 l3 2.4 M7 -4 l-3 -2.4 M7 -4 l-3 2.4"/><path d="M-8 3 C-6 0.6 -4 0.6 -2.6 3 C-1.2 5.4 1.2 5.4 2.6 3 C4 0.6 6 0.6 8 3" stroke-width="2.4"/></g>
<g stroke="#0092da" fill="none" stroke-width="1.8" transform="translate(1082.0 158.0)"><path d="M-7 -4 H7 M-7 -4 l3 -2.4 M-7 -4 l3 2.4 M7 -4 l-3 -2.4 M7 -4 l-3 2.4"/><path d="M-8 3 C-6 0.6 -4 0.6 -2.6 3 C-1.2 5.4 1.2 5.4 2.6 3 C4 0.6 6 0.6 8 3" stroke-width="2.4"/></g>
<path d="M1123.0 284.0 v15 M1118.0 288.5 h10" stroke="#111" stroke-width="2" fill="none"/>
<g transform="translate(789.0 351.0)"><path d="M-8 -6.5 C-5 -5.2 -3 -5.2 0 -6.5 V0 C0 3 -2 5 -4 5 C-6 5 -8 3 -8 0Z" fill="#734a08"/><path d="M-1 -3 C2 -1.7 4.4 -1.7 7.6 -3 V3.4 C7.6 6.4 5.4 8.2 3.3 8.2 C1.2 8.2 -1 6.4 -1 3.4Z" fill="#734a08" stroke="#f2e9dc" stroke-width="0.9"/><g fill="#f2e9dc"><circle cx="-5.6" cy="-2.4" r="0.9"/><circle cx="-2.4" cy="-2.4" r="0.9"/><circle cx="1.6" cy="1.2" r="0.9"/><circle cx="5" cy="1.2" r="0.9"/><path d="M-5.8 1.6 Q-4 3.4 -2.2 1.6 Z"/><path d="M1.4 5.6 Q3.3 3.6 5.2 5.6 Z"/></g></g>
<g transform="translate(760.0 458.0)"><rect x="-7" y="-6.5" width="14" height="13" fill="#734a08"/><g fill="#f2e9dc"><rect x="-3.6" y="-5.2" width="7.2" height="4.4"/><rect x="-3.6" y="0.8" width="7.2" height="4.4"/><rect x="-6.2" y="-5.4" width="1.5" height="1.6"/><rect x="-6.2" y="-2.2" width="1.5" height="1.6"/><rect x="-6.2" y="1" width="1.5" height="1.6"/><rect x="-6.2" y="4" width="1.5" height="1.6"/><rect x="4.7" y="-5.4" width="1.5" height="1.6"/><rect x="4.7" y="-2.2" width="1.5" height="1.6"/><rect x="4.7" y="1" width="1.5" height="1.6"/><rect x="4.7" y="4" width="1.5" height="1.6"/></g></g>
<g stroke="#ac39ac" fill="none" stroke-width="1.3" transform="translate(985.0 536.0)"><path d="M-7 -5 L-4.6 -5 L-2.6 3 L5.4 3 L7 -3.2 L-4 -3.2"/><path d="M-3.4 -0.8 H6.2 M-1 -3 V3 M1.6 -3 V3 M4.2 -3 V3" stroke-width="0.8"/><circle cx="-1.6" cy="5.4" r="1" fill="#ac39ac"/><circle cx="4.4" cy="5.4" r="1" fill="#ac39ac"/></g>
<g fill="#734a08" transform="translate(41.0 571.0)"><path d="M-7 -3 L0 -7 L7 -3 L7 -1.6 L-7 -1.6Z"/><rect x="-5.6" y="-0.8" width="2.2" height="5"/><rect x="-1.1" y="-0.8" width="2.2" height="5"/><rect x="3.4" y="-0.8" width="2.2" height="5"/><rect x="-7" y="4.8" width="14" height="1.8"/></g>
<g fill="#734a08" transform="translate(205.0 592.0)"><path d="M-7 -3 L0 -7 L7 -3 L7 -1.6 L-7 -1.6Z"/><rect x="-5.6" y="-0.8" width="2.2" height="5"/><rect x="-1.1" y="-0.8" width="2.2" height="5"/><rect x="3.4" y="-0.8" width="2.2" height="5"/><rect x="-7" y="4.8" width="14" height="1.8"/></g>
<g fill="#734a08" transform="translate(222.0 613.0)"><path d="M-7 -3 L0 -7 L7 -3 L7 -1.6 L-7 -1.6Z"/><rect x="-5.6" y="-0.8" width="2.2" height="5"/><rect x="-1.1" y="-0.8" width="2.2" height="5"/><rect x="3.4" y="-0.8" width="2.2" height="5"/><rect x="-7" y="4.8" width="14" height="1.8"/></g>
<g transform="translate(205.0 634.0)"><rect x="-7" y="-6.5" width="14" height="13" fill="#734a08"/><g fill="#f2e9dc"><rect x="-3.6" y="-5.2" width="7.2" height="4.4"/><rect x="-3.6" y="0.8" width="7.2" height="4.4"/><rect x="-6.2" y="-5.4" width="1.5" height="1.6"/><rect x="-6.2" y="-2.2" width="1.5" height="1.6"/><rect x="-6.2" y="1" width="1.5" height="1.6"/><rect x="-6.2" y="4" width="1.5" height="1.6"/><rect x="4.7" y="-5.4" width="1.5" height="1.6"/><rect x="4.7" y="-2.2" width="1.5" height="1.6"/><rect x="4.7" y="1" width="1.5" height="1.6"/><rect x="4.7" y="4" width="1.5" height="1.6"/></g></g>
<g stroke="#ac39ac" fill="none" stroke-width="1.3" transform="translate(275.0 606.0)"><path d="M-7 -5 L-4.6 -5 L-2.6 3 L5.4 3 L7 -3.2 L-4 -3.2"/><path d="M-3.4 -0.8 H6.2 M-1 -3 V3 M1.6 -3 V3 M4.2 -3 V3" stroke-width="0.8"/><circle cx="-1.6" cy="5.4" r="1" fill="#ac39ac"/><circle cx="4.4" cy="5.4" r="1" fill="#ac39ac"/></g>
<g stroke="#ac39ac" fill="none" stroke-width="1.3" transform="translate(154.0 773.0)"><path d="M-7 -5 L-4.6 -5 L-2.6 3 L5.4 3 L7 -3.2 L-4 -3.2"/><path d="M-3.4 -0.8 H6.2 M-1 -3 V3 M1.6 -3 V3 M4.2 -3 V3" stroke-width="0.8"/><circle cx="-1.6" cy="5.4" r="1" fill="#ac39ac"/><circle cx="4.4" cy="5.4" r="1" fill="#ac39ac"/></g>
<g stroke="#ac39ac" fill="none" stroke-width="1.3" transform="translate(158.0 825.0)"><path d="M-7 -5 L-4.6 -5 L-2.6 3 L5.4 3 L7 -3.2 L-4 -3.2"/><path d="M-3.4 -0.8 H6.2 M-1 -3 V3 M1.6 -3 V3 M4.2 -3 V3" stroke-width="0.8"/><circle cx="-1.6" cy="5.4" r="1" fill="#ac39ac"/><circle cx="4.4" cy="5.4" r="1" fill="#ac39ac"/></g>
<g fill="#734a08" transform="translate(174.0 916.0)"><path d="M-7.5 -5 C-4 -6 -2 -5.5 -0.5 -4 V6 C-2 4.6 -4 4.2 -7.5 5Z M7.5 -5 C4 -6 2 -5.5 0.5 -4 V6 C2 4.6 4 4.2 7.5 5Z"/></g>
<path d="M281.0 939.0 v15 M276.0 943.5 h10" stroke="#111" stroke-width="2" fill="none"/>
<g fill="#734a08" transform="translate(546.0 742.0)"><path d="M-7 -3 L0 -7 L7 -3 L7 -1.6 L-7 -1.6Z"/><rect x="-5.6" y="-0.8" width="2.2" height="5"/><rect x="-1.1" y="-0.8" width="2.2" height="5"/><rect x="3.4" y="-0.8" width="2.2" height="5"/><rect x="-7" y="4.8" width="14" height="1.8"/></g>
<g stroke="#ac39ac" fill="none" stroke-width="1.3" transform="translate(536.0 791.0)"><path d="M-7 -5 L-4.6 -5 L-2.6 3 L5.4 3 L7 -3.2 L-4 -3.2"/><path d="M-3.4 -0.8 H6.2 M-1 -3 V3 M1.6 -3 V3 M4.2 -3 V3" stroke-width="0.8"/><circle cx="-1.6" cy="5.4" r="1" fill="#ac39ac"/><circle cx="4.4" cy="5.4" r="1" fill="#ac39ac"/></g>
<g fill="#734a08" transform="translate(497.0 879.0)"><path d="M-7 -3 L0 -7 L7 -3 L7 -1.6 L-7 -1.6Z"/><rect x="-5.6" y="-0.8" width="2.2" height="5"/><rect x="-1.1" y="-0.8" width="2.2" height="5"/><rect x="3.4" y="-0.8" width="2.2" height="5"/><rect x="-7" y="4.8" width="14" height="1.8"/></g>
<g fill="#734a08" transform="translate(588.0 943.0)"><path d="M-7 -3 L0 -7 L7 -3 L7 -1.6 L-7 -1.6Z"/><rect x="-5.6" y="-0.8" width="2.2" height="5"/><rect x="-1.1" y="-0.8" width="2.2" height="5"/><rect x="3.4" y="-0.8" width="2.2" height="5"/><rect x="-7" y="4.8" width="14" height="1.8"/></g>
<g fill="#734a08" transform="translate(613.0 968.0)"><path d="M-7 -3 L0 -7 L7 -3 L7 -1.6 L-7 -1.6Z"/><rect x="-5.6" y="-0.8" width="2.2" height="5"/><rect x="-1.1" y="-0.8" width="2.2" height="5"/><rect x="3.4" y="-0.8" width="2.2" height="5"/><rect x="-7" y="4.8" width="14" height="1.8"/></g>
<g stroke="#734a08" fill="none" stroke-width="1.3" transform="translate(641.0 943.0)"><path d="M0 -3 L-2 7 H2Z" fill="#734a08"/><circle cx="0" cy="-3.6" r="1.4" fill="#734a08"/><path d="M-3.4 -7 A5 5 0 0 0 -3.4 -0.4 M3.4 -7 A5 5 0 0 1 3.4 -0.4 M-5.8 -8.6 A8 8 0 0 0 -5.8 1.2 M5.8 -8.6 A8 8 0 0 1 5.8 1.2"/></g>
<path d="M513.0 961.0 v15 M508.0 965.5 h10" stroke="#111" stroke-width="2" fill="none"/>
<g stroke="#6a5ad8" fill="none" stroke-width="1.4" transform="translate(161.0 993.0)"><circle cx="0" cy="-5" r="1.6"/><path d="M0 -3.4 V6 M-3.4 -1 H3.4 M-6 1.6 C-5 6 -2 6.4 0 6.4 C2 6.4 5 6 6 1.6"/></g>
<g stroke="#6a5ad8" fill="none" stroke-width="1.4" transform="translate(121.0 1013.0)"><circle cx="0" cy="-5" r="1.6"/><path d="M0 -3.4 V6 M-3.4 -1 H3.4 M-6 1.6 C-5 6 -2 6.4 0 6.4 C2 6.4 5 6 6 1.6"/></g>
<g fill="#734a08" transform="translate(1058.0 606.0)"><path d="M-7 -3 L0 -7 L7 -3 L7 -1.6 L-7 -1.6Z"/><rect x="-5.6" y="-0.8" width="2.2" height="5"/><rect x="-1.1" y="-0.8" width="2.2" height="5"/><rect x="3.4" y="-0.8" width="2.2" height="5"/><rect x="-7" y="4.8" width="14" height="1.8"/></g>
<g fill="#734a08" transform="translate(1009.0 614.0)"><circle cx="0" cy="-3.6" r="2.8"/><path d="M-3.6 -6.2 H3.6 L2.6 -8 H-2.6Z"/><path d="M-6.4 7.4 V3 C-6.4 0.6 -3 0 0 0 C3 0 6.4 0.6 6.4 3 V7.4Z"/></g>
<g transform="translate(738.0 931.0)"><path d="M-6 -3 H6 L7 7.4 H-7Z" fill="#ac39ac"/><path d="M-2.6 -3 V-5 A2.6 2.6 0 0 1 2.6 -5 V-3" fill="none" stroke="#ac39ac" stroke-width="1.3"/></g>
<g stroke="#ac39ac" fill="none" stroke-width="1.3" transform="translate(905.0 945.0)"><path d="M-7 -5 L-4.6 -5 L-2.6 3 L5.4 3 L7 -3.2 L-4 -3.2"/><path d="M-3.4 -0.8 H6.2 M-1 -3 V3 M1.6 -3 V3 M4.2 -3 V3" stroke-width="0.8"/><circle cx="-1.6" cy="5.4" r="1" fill="#ac39ac"/><circle cx="4.4" cy="5.4" r="1" fill="#ac39ac"/></g>
<g transform="translate(799.0 1003.0)"><rect x="-7" y="-6.5" width="14" height="13" fill="#734a08"/><g fill="#f2e9dc"><rect x="-3.6" y="-5.2" width="7.2" height="4.4"/><rect x="-3.6" y="0.8" width="7.2" height="4.4"/><rect x="-6.2" y="-5.4" width="1.5" height="1.6"/><rect x="-6.2" y="-2.2" width="1.5" height="1.6"/><rect x="-6.2" y="1" width="1.5" height="1.6"/><rect x="-6.2" y="4" width="1.5" height="1.6"/><rect x="4.7" y="-5.4" width="1.5" height="1.6"/><rect x="4.7" y="-2.2" width="1.5" height="1.6"/><rect x="4.7" y="1" width="1.5" height="1.6"/><rect x="4.7" y="4" width="1.5" height="1.6"/></g></g>
<g fill="#734a08" transform="translate(128.0 1060.0)"><path d="M-3.4 -7.5 H3.4 V-6 H2.2 C2.2 -4.6 6 -3 6 0.6 C6 3.6 3 5.4 1.6 6 L2.6 7.6 H-2.6 L-1.6 6 C-3 5.4 -6 3.6 -6 0.6 C-6 -3 -2.2 -4.6 -2.2 -6 H-3.4Z"/></g>
<g fill="#734a08" transform="translate(24.0 1075.0)"><path d="M-7 -3 L0 -7 L7 -3 L7 -1.6 L-7 -1.6Z"/><rect x="-5.6" y="-0.8" width="2.2" height="5"/><rect x="-1.1" y="-0.8" width="2.2" height="5"/><rect x="3.4" y="-0.8" width="2.2" height="5"/><rect x="-7" y="4.8" width="14" height="1.8"/></g>
<g fill="#734a08" transform="translate(224.0 1077.0)"><path d="M-7 -3 L0 -7 L7 -3 L7 -1.6 L-7 -1.6Z"/><rect x="-5.6" y="-0.8" width="2.2" height="5"/><rect x="-1.1" y="-0.8" width="2.2" height="5"/><rect x="3.4" y="-0.8" width="2.2" height="5"/><rect x="-7" y="4.8" width="14" height="1.8"/></g>
<path d="M157.0 1102.0 v15 M152.0 1106.5 h10" stroke="#111" stroke-width="2" fill="none"/>
<g fill="#734a08" transform="translate(549.0 1189.0)"><path d="M-0.6 -8 H4 L3 -6.6 L4 -5.2 H0.6 V-2.6 L7 1 V2.4 H-7 V1 L-0.6 -2.6Z"/><rect x="-6" y="3" width="12" height="4.4"/><rect x="-1.4" y="4" width="2.8" height="3.4" fill="#eee"/></g>
<g stroke="#ac39ac" fill="none" stroke-width="1.3" transform="translate(672.0 1123.0)"><path d="M-7 -5 L-4.6 -5 L-2.6 3 L5.4 3 L7 -3.2 L-4 -3.2"/><path d="M-3.4 -0.8 H6.2 M-1 -3 V3 M1.6 -3 V3 M4.2 -3 V3" stroke-width="0.8"/><circle cx="-1.6" cy="5.4" r="1" fill="#ac39ac"/><circle cx="4.4" cy="5.4" r="1" fill="#ac39ac"/></g>
<g fill="#734a08" transform="translate(165.0 1308.0)"><path d="M-7 -3 L0 -7 L7 -3 L7 -1.6 L-7 -1.6Z"/><rect x="-5.6" y="-0.8" width="2.2" height="5"/><rect x="-1.1" y="-0.8" width="2.2" height="5"/><rect x="3.4" y="-0.8" width="2.2" height="5"/><rect x="-7" y="4.8" width="14" height="1.8"/></g>
<g stroke="#734a08" fill="none" stroke-width="1.6" transform="translate(124.0 1284.0)"><path d="M-4.6 -7 L3.6 7 M4.6 -7 L-3.6 7 M-6 -5.4 L-2.6 -7.4"/></g>
<g fill="#734a08" transform="translate(463.0 1359.0)"><path d="M-7 -3 L0 -7 L7 -3 L7 -1.6 L-7 -1.6Z"/><rect x="-5.6" y="-0.8" width="2.2" height="5"/><rect x="-1.1" y="-0.8" width="2.2" height="5"/><rect x="3.4" y="-0.8" width="2.2" height="5"/><rect x="-7" y="4.8" width="14" height="1.8"/></g>
<g fill="#734a08" transform="translate(502.0 1362.0)"><path d="M-7 -3 L0 -7 L7 -3 L7 -1.6 L-7 -1.6Z"/><rect x="-5.6" y="-0.8" width="2.2" height="5"/><rect x="-1.1" y="-0.8" width="2.2" height="5"/><rect x="3.4" y="-0.8" width="2.2" height="5"/><rect x="-7" y="4.8" width="14" height="1.8"/></g>
<g fill="#734a08" transform="translate(560.0 1372.0)"><path d="M-7 -3 L0 -7 L7 -3 L7 -1.6 L-7 -1.6Z"/><rect x="-5.6" y="-0.8" width="2.2" height="5"/><rect x="-1.1" y="-0.8" width="2.2" height="5"/><rect x="3.4" y="-0.8" width="2.2" height="5"/><rect x="-7" y="4.8" width="14" height="1.8"/></g>
<g transform="translate(549.0 1353.0)"><path d="M-8 -6.5 C-5 -5.2 -3 -5.2 0 -6.5 V0 C0 3 -2 5 -4 5 C-6 5 -8 3 -8 0Z" fill="#734a08"/><path d="M-1 -3 C2 -1.7 4.4 -1.7 7.6 -3 V3.4 C7.6 6.4 5.4 8.2 3.3 8.2 C1.2 8.2 -1 6.4 -1 3.4Z" fill="#734a08" stroke="#f2e9dc" stroke-width="0.9"/><g fill="#f2e9dc"><circle cx="-5.6" cy="-2.4" r="0.9"/><circle cx="-2.4" cy="-2.4" r="0.9"/><circle cx="1.6" cy="1.2" r="0.9"/><circle cx="5" cy="1.2" r="0.9"/><path d="M-5.8 1.6 Q-4 3.4 -2.2 1.6 Z"/><path d="M1.4 5.6 Q3.3 3.6 5.2 5.6 Z"/></g></g>
<g fill="#734a08" transform="translate(362.0 1434.0)"><path d="M-7.5 -5 C-4 -6 -2 -5.5 -0.5 -4 V6 C-2 4.6 -4 4.2 -7.5 5Z M7.5 -5 C4 -6 2 -5.5 0.5 -4 V6 C2 4.6 4 4.2 7.5 5Z"/></g>
<g fill="#734a08" transform="translate(514.0 1417.0)"><path d="M-7 -3 L0 -7 L7 -3 L7 -1.6 L-7 -1.6Z"/><rect x="-5.6" y="-0.8" width="2.2" height="5"/><rect x="-1.1" y="-0.8" width="2.2" height="5"/><rect x="3.4" y="-0.8" width="2.2" height="5"/><rect x="-7" y="4.8" width="14" height="1.8"/></g>
<g fill="#734a08" transform="translate(574.0 1439.0)"><path d="M-8 7 V-3 H-6.6 V-5 H-5 V-3 H-3.6 V-1 H-2.6 V-5 L0 -8 L2.6 -5 V-1 H3.6 V-3 H5 V-5 H6.6 V-3 H8 V7 H2 V3.4 A2 2 0 0 0 -2 3.4 V7Z"/></g>
<g fill="#734a08" transform="translate(657.0 1485.0)"><path d="M-7 -3 L0 -7 L7 -3 L7 -1.6 L-7 -1.6Z"/><rect x="-5.6" y="-0.8" width="2.2" height="5"/><rect x="-1.1" y="-0.8" width="2.2" height="5"/><rect x="3.4" y="-0.8" width="2.2" height="5"/><rect x="-7" y="4.8" width="14" height="1.8"/></g>
<g fill="#734a08" transform="translate(694.0 1324.0)"><path d="M-3.4 -7.5 H3.4 V-6 H2.2 C2.2 -4.6 6 -3 6 0.6 C6 3.6 3 5.4 1.6 6 L2.6 7.6 H-2.6 L-1.6 6 C-3 5.4 -6 3.6 -6 0.6 C-6 -3 -2.2 -4.6 -2.2 -6 H-3.4Z"/></g>
<g stroke="#734a08" fill="none" stroke-width="1.4" transform="translate(884.0 1150.0)"><path d="M0 -7 V6 M-4.6 6.6 H4.6 M-6.4 -4.4 H6.4 M-6.4 -4.4 L-8.4 1 H-4.4Z M6.4 -4.4 L4.4 1 H8.4Z"/></g>
<g transform="translate(793.0 1253.0)"><path d="M-8 -6.5 C-5 -5.2 -3 -5.2 0 -6.5 V0 C0 3 -2 5 -4 5 C-6 5 -8 3 -8 0Z" fill="#734a08"/><path d="M-1 -3 C2 -1.7 4.4 -1.7 7.6 -3 V3.4 C7.6 6.4 5.4 8.2 3.3 8.2 C1.2 8.2 -1 6.4 -1 3.4Z" fill="#734a08" stroke="#f2e9dc" stroke-width="0.9"/><g fill="#f2e9dc"><circle cx="-5.6" cy="-2.4" r="0.9"/><circle cx="-2.4" cy="-2.4" r="0.9"/><circle cx="1.6" cy="1.2" r="0.9"/><circle cx="5" cy="1.2" r="0.9"/><path d="M-5.8 1.6 Q-4 3.4 -2.2 1.6 Z"/><path d="M1.4 5.6 Q3.3 3.6 5.2 5.6 Z"/></g></g>
<g fill="#734a08" transform="translate(835.0 1270.0)"><path d="M-8 7 V-3 H-6.6 V-5 H-5 V-3 H-3.6 V-1 H-2.6 V-5 L0 -8 L2.6 -5 V-1 H3.6 V-3 H5 V-5 H6.6 V-3 H8 V7 H2 V3.4 A2 2 0 0 0 -2 3.4 V7Z"/></g>
<g stroke="#ac39ac" fill="none" stroke-width="1.3" transform="translate(956.0 1101.0)"><path d="M-7 -5 L-4.6 -5 L-2.6 3 L5.4 3 L7 -3.2 L-4 -3.2"/><path d="M-3.4 -0.8 H6.2 M-1 -3 V3 M1.6 -3 V3 M4.2 -3 V3" stroke-width="0.8"/><circle cx="-1.6" cy="5.4" r="1" fill="#ac39ac"/><circle cx="4.4" cy="5.4" r="1" fill="#ac39ac"/></g>
<g stroke="#ac39ac" fill="none" stroke-width="1.3" transform="translate(1053.0 1152.0)"><path d="M-7 -5 L-4.6 -5 L-2.6 3 L5.4 3 L7 -3.2 L-4 -3.2"/><path d="M-3.4 -0.8 H6.2 M-1 -3 V3 M1.6 -3 V3 M4.2 -3 V3" stroke-width="0.8"/><circle cx="-1.6" cy="5.4" r="1" fill="#ac39ac"/><circle cx="4.4" cy="5.4" r="1" fill="#ac39ac"/></g>
<path transform="translate(978.0 1332.0)" d="M0 -8 C1 -4 6 -2 5 3 C4.6 6 2 7.6 0 7.6 C-3 7.6 -5.4 5.4 -5.2 2.2 C-5 -0.6 -2.6 -1.6 -3 -4.6 C-1 -3.6 -0.4 -1.6 -0.6 0 C1.4 -2 1 -5 0 -8Z" fill="#734a08"/>
<g stroke="#ac39ac" fill="none" stroke-width="1.3" transform="translate(1298.0 1265.0)"><path d="M-7 -5 L-4.6 -5 L-2.6 3 L5.4 3 L7 -3.2 L-4 -3.2"/><path d="M-3.4 -0.8 H6.2 M-1 -3 V3 M1.6 -3 V3 M4.2 -3 V3" stroke-width="0.8"/><circle cx="-1.6" cy="5.4" r="1" fill="#ac39ac"/><circle cx="4.4" cy="5.4" r="1" fill="#ac39ac"/></g>
<g stroke="#ac39ac" fill="none" stroke-width="1.3" transform="translate(1275.0 1329.0)"><path d="M-7 -5 L-4.6 -5 L-2.6 3 L5.4 3 L7 -3.2 L-4 -3.2"/><path d="M-3.4 -0.8 H6.2 M-1 -3 V3 M1.6 -3 V3 M4.2 -3 V3" stroke-width="0.8"/><circle cx="-1.6" cy="5.4" r="1" fill="#ac39ac"/><circle cx="4.4" cy="5.4" r="1" fill="#ac39ac"/></g>
<g fill="#734a08" transform="translate(24.0 1075.0)"><path d="M-7 -3 L0 -7 L7 -3 L7 -1.6 L-7 -1.6Z"/><rect x="-5.6" y="-0.8" width="2.2" height="5"/><rect x="-1.1" y="-0.8" width="2.2" height="5"/><rect x="3.4" y="-0.8" width="2.2" height="5"/><rect x="-7" y="4.8" width="14" height="1.8"/></g>
<g fill="#734a08" transform="translate(0.0 1477.0)"><path d="M-7 -3 L0 -7 L7 -3 L7 -1.6 L-7 -1.6Z"/><rect x="-5.6" y="-0.8" width="2.2" height="5"/><rect x="-1.1" y="-0.8" width="2.2" height="5"/><rect x="3.4" y="-0.8" width="2.2" height="5"/><rect x="-7" y="4.8" width="14" height="1.8"/></g>
<rect x="134.8" y="12.8" width="6.4" height="6.4" fill="#0092da"/>
<rect x="189.8" y="151.8" width="6.4" height="6.4" fill="#0092da"/>
<rect x="602.8" y="154.8" width="6.4" height="6.4" fill="#0092da"/>
<rect x="296.8" y="414.8" width="6.4" height="6.4" fill="#0092da"/>
<rect x="947.8" y="402.8" width="6.4" height="6.4" fill="#0092da"/>
<rect x="440.8" y="559.8" width="6.4" height="6.4" fill="#0092da"/>
<rect x="335.8" y="799.8" width="6.4" height="6.4" fill="#0092da"/>
<rect x="350.8" y="806.8" width="6.4" height="6.4" fill="#0092da"/>
<rect x="602.8" y="838.8" width="6.4" height="6.4" fill="#0092da"/>
<rect x="448.8" y="931.8" width="6.4" height="6.4" fill="#0092da"/>
<rect x="346.8" y="968.8" width="6.4" height="6.4" fill="#0092da"/>
<rect x="426.8" y="988.8" width="6.4" height="6.4" fill="#0092da"/>
<rect x="184.8" y="1174.8" width="6.4" height="6.4" fill="#0092da"/>
<rect x="92.8" y="1204.8" width="6.4" height="6.4" fill="#0092da"/>
<rect x="104.8" y="1230.8" width="6.4" height="6.4" fill="#0092da"/>
<rect x="681.8" y="999.8" width="6.4" height="6.4" fill="#0092da"/>
<rect x="688.8" y="992.8" width="6.4" height="6.4" fill="#0092da"/>
<rect x="899.8" y="1023.8" width="6.4" height="6.4" fill="#0092da"/>
<rect x="797.8" y="1054.8" width="6.4" height="6.4" fill="#0092da"/>
<rect x="628.8" y="1213.8" width="6.4" height="6.4" fill="#0092da"/>
<rect x="639.8" y="1228.8" width="6.4" height="6.4" fill="#0092da"/>
<rect x="486.8" y="1123.8" width="6.4" height="6.4" fill="#0092da"/>
<rect x="459.8" y="1131.8" width="6.4" height="6.4" fill="#0092da"/>
<rect x="1026.8" y="1026.8" width="6.4" height="6.4" fill="#0092da"/>
<rect x="1212.8" y="531.8" width="6.4" height="6.4" fill="#0092da"/>
<rect x="1337.8" y="509.8" width="6.4" height="6.4" fill="#0092da"/>
<rect x="1150.8" y="1230.8" width="6.4" height="6.4" fill="#0092da"/>
<rect x="1139.8" y="1319.8" width="6.4" height="6.4" fill="#0092da"/>
<rect x="1158.8" y="1402.8" width="6.4" height="6.4" fill="#0092da"/>
<rect x="1115.8" y="1423.8" width="6.4" height="6.4" fill="#0092da"/>
<rect x="173.8" y="1393.8" width="6.4" height="6.4" fill="#0092da"/>
<rect x="218.8" y="1382.8" width="6.4" height="6.4" fill="#0092da"/>
<rect x="318.8" y="1445.8" width="6.4" height="6.4" fill="#0092da"/>
<rect x="335.8" y="1489.8" width="6.4" height="6.4" fill="#0092da"/>
<rect x="536.8" y="1406.8" width="6.4" height="6.4" fill="#0092da"/>
<rect x="632.8" y="1367.8" width="6.4" height="6.4" fill="#0092da"/>
<rect x="1284.8" y="936.8" width="6.4" height="6.4" fill="#0092da"/>
<rect x="190.8" y="37.8" width="6.4" height="6.4" fill="#7981b0"/>
<rect x="155.8" y="71.8" width="6.4" height="6.4" fill="#7981b0"/>
<rect x="242.8" y="86.8" width="6.4" height="6.4" fill="#7981b0"/>
<rect x="698.8" y="194.8" width="6.4" height="6.4" fill="#7981b0"/>
<rect x="721.8" y="203.8" width="6.4" height="6.4" fill="#7981b0"/>
<rect x="702.8" y="281.8" width="6.4" height="6.4" fill="#7981b0"/>
<rect x="1052.8" y="268.8" width="6.4" height="6.4" fill="#7981b0"/>
<rect x="1070.8" y="394.8" width="6.4" height="6.4" fill="#7981b0"/>
<rect x="1218.8" y="501.8" width="6.4" height="6.4" fill="#7981b0"/>
<rect x="1242.8" y="541.8" width="6.4" height="6.4" fill="#7981b0"/>
<rect x="1209.8" y="561.8" width="6.4" height="6.4" fill="#7981b0"/>
<rect x="226.8" y="761.8" width="6.4" height="6.4" fill="#7981b0"/>
<rect x="289.8" y="768.8" width="6.4" height="6.4" fill="#7981b0"/>
<rect x="246.8" y="859.8" width="6.4" height="6.4" fill="#7981b0"/>
<rect x="339.8" y="968.8" width="6.4" height="6.4" fill="#7981b0"/>
<rect x="13.8" y="664.8" width="6.4" height="6.4" fill="#7981b0"/>
<rect x="242.8" y="652.8" width="6.4" height="6.4" fill="#7981b0"/>
<rect x="400.8" y="552.8" width="6.4" height="6.4" fill="#7981b0"/>
<rect x="298.8" y="509.8" width="6.4" height="6.4" fill="#7981b0"/>
<rect x="816.8" y="1281.8" width="6.4" height="6.4" fill="#7981b0"/>
<rect x="1154.8" y="1464.8" width="6.4" height="6.4" fill="#7981b0"/>
<rect x="26.8" y="1280.8" width="6.4" height="6.4" fill="#7981b0"/>
<rect x="1281.8" y="919.8" width="6.4" height="6.4" fill="#7981b0"/>
<rect x="1169.0" y="636.0" width="31.5" height="23.5" rx="3" fill="#f0c400" stroke="#a08800" stroke-width="1.2"/>
<text x="1184.8" y="652.0" font-size="12" text-anchor="middle" fill="#1a1a1a">B 2</text>
<rect x="1054.0" y="830.0" width="33.0" height="39.0" rx="3" fill="#f0c400" stroke="#3a3000" stroke-width="1.2"/>
<text x="1070.5" y="845.5" font-size="12" text-anchor="middle" fill="#1a1a1a">B 1</text>
<text x="1070.5" y="862.0" font-size="12" text-anchor="middle" fill="#1a1a1a">B 5</text>
<rect x="803.0" y="1065.0" width="34.0" height="22.0" rx="3" fill="#f0c400" stroke="#3a3000" stroke-width="1.2"/>
<text x="820.0" y="1080.2" font-size="12" text-anchor="middle" fill="#1a1a1a">B 1</text>
<g text-anchor="middle" paint-order="stroke" stroke="#ffffff" stroke-opacity="0.75" stroke-width="2.2" stroke-linejoin="round">
<text x="62.0" y="112.6" font-size="13.1" fill="#3a3a3a" transform="rotate(-6 62.0 108.0)">Torstr.</text>
<text x="385.0" y="116.6" font-size="13.1" fill="#3a3a3a" transform="rotate(17 385.0 112.0)">Torstr.</text>
<text x="485.0" y="132.6" font-size="13.1" fill="#3a3a3a" transform="rotate(17 485.0 128.0)">Torstr.</text>
<text x="604.0" y="180.6" font-size="13.1" fill="#3a3a3a" transform="rotate(18 604.0 176.0)">Torstr.</text>
<text x="157.0" y="96.9" font-size="14" fill="#3c50c0" font-weight="bold">Rosenthaler</text>
<text x="160.0" y="113.9" font-size="14" fill="#3c50c0" font-weight="bold">Platz</text>
<text x="246.0" y="111.5" font-size="12.9" fill="#6670c8">U Rosenthaler</text>
<text x="246.0" y="126.5" font-size="12.9" fill="#6670c8">Platz</text>
<text x="107.0" y="172.9" font-size="11.2" fill="#3a3a3a" transform="rotate(-2 107.0 169.0)">Linienstr.</text>
<text x="240.0" y="166.9" font-size="11.2" fill="#3a3a3a" transform="rotate(-3 240.0 163.0)">Linienstr.</text>
<text x="334.0" y="175.9" font-size="11.2" fill="#3a3a3a" transform="rotate(12 334.0 172.0)">Linienstr.</text>
<text x="514.0" y="211.9" font-size="11.2" fill="#3a3a3a" transform="rotate(11 514.0 208.0)">Linienstr.</text>
<text x="32.0" y="243.9" font-size="11.2" fill="#3a3a3a" transform="rotate(72 32.0 240.0)">Kleine Auguststr.</text>
<text x="111.0" y="229.9" font-size="11.2" fill="#3a3a3a" transform="rotate(68 111.0 226.0)">Joachimstr.</text>
<text x="152.0" y="333.9" font-size="11.2" fill="#3a3a3a" transform="rotate(68 152.0 330.0)">Joachimstr.</text>
<text x="186.0" y="271.9" font-size="11.2" fill="#3a3a3a" transform="rotate(-16 186.0 268.0)">Auguststr.</text>
<text x="95.0" y="299.9" font-size="11.2" fill="#3a3a3a" transform="rotate(-16 95.0 296.0)">Auguststr.</text>
<text x="20.0" y="321.9" font-size="11.2" fill="#3a3a3a" transform="rotate(-18 20.0 318.0)">Auguststr.</text>
<text x="222.0" y="208.9" font-size="11.2" fill="#3a3a3a" transform="rotate(64 222.0 205.0)">Rosenthaler Str.</text>
<text x="287.0" y="348.9" font-size="11.2" fill="#3a3a3a" transform="rotate(70 287.0 345.0)">Rosenthaler Str.</text>
<text x="282.0" y="238.9" font-size="11.2" fill="#3a3a3a" transform="rotate(84 282.0 235.0)">Kleine Rosenthaler Str.</text>
<text x="383.0" y="248.9" font-size="11.2" fill="#3a3a3a" transform="rotate(-75 383.0 245.0)">Gormannstr.</text>
<text x="340.0" y="383.9" font-size="11.2" fill="#3a3a3a" transform="rotate(-75 340.0 380.0)">Gormannstr.</text>
<text x="327.0" y="291.9" font-size="11.2" fill="#3a3a3a" transform="rotate(18 327.0 288.0)">Mulackstr.</text>
<text x="464.0" y="330.9" font-size="11.2" fill="#3a3a3a" transform="rotate(18 464.0 327.0)">Mulackstr.</text>
<text x="341.0" y="337.9" font-size="11.2" fill="#3a3a3a" transform="rotate(26 341.0 334.0)">Steinstr.</text>
<text x="460.0" y="395.9" font-size="11.2" fill="#3a3a3a" transform="rotate(24 460.0 392.0)">Steinstr.</text>
<text x="512.0" y="253.9" font-size="11.2" fill="#3a3a3a" transform="rotate(-65 512.0 250.0)">Rückerstr.</text>
<text x="100.0" y="351.9" font-size="11.2" fill="#3a3a3a" transform="rotate(24 100.0 348.0)">Gipsstr.</text>
<text x="228.0" y="407.9" font-size="11.2" fill="#3a3a3a" transform="rotate(24 228.0 404.0)">Gipsstr.</text>
<text x="147.0" y="487.9" font-size="11.2" fill="#3a3a3a" transform="rotate(27 147.0 484.0)">Sophienstr.</text>
<text x="593.0" y="293.9" font-size="11.2" fill="#3a3a3a" transform="rotate(-66 593.0 290.0)">Alte Schönhauser Str.</text>
<text x="632.0" y="303.9" font-size="11.2" fill="#3a3a3a" transform="rotate(-78 632.0 300.0)">Max-Beer-Str.</text>
<text x="488.0" y="63.9" font-size="11.2" fill="#3a3a3a" transform="rotate(40 488.0 60.0)">Zehdenicker Str.</text>
<text x="541.0" y="71.9" font-size="11.2" fill="#3a3a3a" transform="rotate(-66 541.0 68.0)">Christinenstr.</text>
<text x="598.0" y="103.9" font-size="11.2" fill="#3a3a3a" transform="rotate(-66 598.0 100.0)">Angermünder Str.</text>
<text x="647.0" y="65.9" font-size="11.2" fill="#3a3a3a" transform="rotate(24 647.0 62.0)">Lottumstr.</text>
<text x="432.0" y="21.9" font-size="11.2" fill="#7a8a7a" transform="rotate(-80 432.0 18.0)">Mitte</text>
<text x="67.0" y="468.3" font-size="18" fill="#8a8a8a">Spandauer</text>
<text x="68.0" y="490.3" font-size="18" fill="#8a8a8a">Vorstadt</text>
<text x="405.0" y="424.9" font-size="11.2" fill="#7a7a3a" font-style="italic">Freie Waldorfschule</text>
<text x="404.0" y="439.9" font-size="11.2" fill="#7a7a3a" font-style="italic">Berlin-Mitte</text>
<text x="810.0" y="133.9" font-size="11.2" fill="#3a3a3a" transform="rotate(-62 810.0 130.0)">Straßburger Str.</text>
<text x="1012.0" y="111.9" font-size="11.2" fill="#3a3a3a" transform="rotate(55 1012.0 108.0)">Saarbrücker Str.</text>
<text x="1108.0" y="164.6" font-size="13.1" fill="#3a3a3a" transform="rotate(-60 1108.0 160.0)">Prenzlauer Allee</text>
<text x="1230.0" y="203.9" font-size="11.2" fill="#3a3a3a" transform="rotate(-6 1230.0 200.0)">Prenzlauer Berg</text>
<text x="1077.0" y="82.2" font-size="12" fill="#a05a5a" font-style="italic">Bötzow</text>
<text x="1077.0" y="100.2" font-size="12" fill="#a05a5a" font-style="italic">Berlin</text>
<text x="1258.0" y="71.9" font-size="11.2" fill="#4a6a4a" font-style="italic">Sankt Nicolai</text>
<text x="1258.0" y="86.9" font-size="11.2" fill="#4a6a4a" font-style="italic">und Sankt</text>
<text x="1258.0" y="101.9" font-size="11.2" fill="#4a6a4a" font-style="italic">Marien</text>
<text x="1258.0" y="116.9" font-size="11.2" fill="#4a6a4a" font-style="italic">Friedhof</text>
<text x="1258.0" y="131.9" font-size="11.2" fill="#4a6a4a" font-style="italic">II</text>
<text x="1312.0" y="17.9" font-size="11.2" fill="#5a9a5a" font-style="italic">Leisepark</text>
<text x="726.0" y="230.5" font-size="12.9" fill="#6670c8">U Rosa-</text>
<text x="726.0" y="245.5" font-size="12.9" fill="#6670c8">Luxemburg-</text>
<text x="726.0" y="260.5" font-size="12.9" fill="#6670c8">Platz</text>
<text x="705.0" y="308.9" font-size="14" fill="#3c50c0" font-weight="bold">Rosa-Luxemburg-</text>
<text x="705.0" y="324.9" font-size="14" fill="#3c50c0" font-weight="bold">Platz</text>
<text x="812.0" y="241.6" font-size="13.1" fill="#3a3a3a" transform="rotate(22 812.0 237.0)">Torstr.</text>
<text x="906.0" y="285.6" font-size="13.1" fill="#3a3a3a" transform="rotate(24 906.0 281.0)">Torstr.</text>
<text x="764.0" y="270.9" font-size="11.2" fill="#3a3a3a" transform="rotate(-62 764.0 267.0)">Zolastr.</text>
<text x="1055.0" y="294.5" font-size="12.9" fill="#6670c8">Mollstraße/</text>
<text x="1055.0" y="309.5" font-size="12.9" fill="#6670c8">Prenzlauer</text>
<text x="1055.0" y="324.5" font-size="12.9" fill="#6670c8">Allee</text>
<text x="1034.0" y="334.5" font-size="12.9" fill="#6670c8">Mollstraße/</text>
<text x="1040.0" y="349.5" font-size="12.9" fill="#6670c8">Prenzlauer</text>
<text x="1034.0" y="364.5" font-size="12.9" fill="#6670c8">Allee</text>
<text x="1072.0" y="422.5" font-size="12.9" fill="#6670c8">Mollstraße/</text>
<text x="1072.0" y="437.5" font-size="12.9" fill="#6670c8">Prenzlauer</text>
<text x="1072.0" y="451.5" font-size="12.9" fill="#6670c8">Allee</text>
<text x="1230.0" y="388.9" font-size="11.2" fill="#7a7a3a" font-style="italic">Helene-</text>
<text x="1230.0" y="403.9" font-size="11.2" fill="#7a7a3a" font-style="italic">Haeusler-</text>
<text x="1230.0" y="418.9" font-size="11.2" fill="#7a7a3a" font-style="italic">Schule</text>
<text x="1318.0" y="283.9" font-size="11.2" fill="#7a7a3a" font-style="italic">Kita Prenz</text>
<text x="1330.0" y="298.9" font-size="11.2" fill="#7a7a3a" font-style="italic">Berg</text>
<text x="1148.0" y="472.6" font-size="13.1" fill="#3a3a3a" transform="rotate(38 1148.0 468.0)">Mollstr.</text>
<text x="1130.0" y="431.9" font-size="11.2" fill="#9a8a9a" transform="rotate(38 1130.0 428.0)">Mitte</text>
<text x="1272.0" y="511.4" font-size="15.4" fill="#8a8a8a">Königsstadt</text>
<text x="1254.0" y="530.7" font-size="13.4" fill="#444">Mollknoten</text>
<text x="1287.0" y="567.5" font-size="12.9" fill="#6670c8">Mollstraße/</text>
<text x="1287.0" y="582.5" font-size="12.9" fill="#6670c8">Otto-Braun-</text>
<text x="1287.0" y="597.5" font-size="12.9" fill="#6670c8">Straße</text>
<text x="672.0" y="353.9" font-size="11.2" fill="#3a3a3a" transform="rotate(-79 672.0 350.0)">Almstadtstr.</text>
<text x="878.0" y="378.9" font-size="11.2" fill="#3a3a3a" transform="rotate(-25 878.0 375.0)">Weydingerstr.</text>
<text x="822.0" y="451.9" font-size="11.2" fill="#3a3a3a" transform="rotate(-68 822.0 448.0)">Kleine Alexanderstr.</text>
<text x="694.0" y="437.9" font-size="11.2" fill="#3a3a3a" transform="rotate(27 694.0 434.0)">Hirten</text>
<text x="778.0" y="484.9" font-size="11.2" fill="#3a3a3a" transform="rotate(27 778.0 481.0)">Hirtenstr.</text>
<text x="910.0" y="484.6" font-size="13.1" fill="#3a3a3a" transform="rotate(-54 910.0 480.0)">Karl-Liebknecht-Str.</text>
<text x="993.0" y="500.9" font-size="11.2" fill="#3a3a3a" transform="rotate(36 993.0 497.0)">Wadzeckstr.</text>
<text x="1057.0" y="503.9" font-size="11.2" fill="#3a3a3a" transform="rotate(-58 1057.0 500.0)">Keibelstr.</text>
<text x="1093.0" y="570.9" font-size="11.2" fill="#3a3a3a" transform="rotate(30 1093.0 567.0)">Wadzeckstr.</text>
<text x="770.0" y="561.9" font-size="11.2" fill="#3a3a3a" transform="rotate(-62 770.0 558.0)">Kleine Alexanderstr.</text>
<text x="1003.0" y="598.9" font-size="11.2" fill="#3a3a3a" transform="rotate(-68 1003.0 595.0)">Keibelstr.</text>
<text x="884.0" y="615.9" font-size="11.2" fill="#3a3a3a" transform="rotate(25 884.0 612.0)">Keibelstr.</text>
<text x="375.0" y="583.9" font-size="11.2" fill="#3a3a3a" transform="rotate(6 375.0 580.0)">Neue Schönhauser Str.</text>
<text x="587.0" y="611.9" font-size="11.2" fill="#3a3a3a" transform="rotate(26 587.0 608.0)">Münzstr.</text>
<text x="532.0" y="643.9" font-size="11.2" fill="#3a3a3a" transform="rotate(-70 532.0 640.0)">Rochstr.</text>
<text x="386.0" y="521.9" font-size="14" fill="#3c50c0" font-weight="bold">Weinmeisterstraße</text>
<text x="300.0" y="535.5" font-size="12.9" fill="#6670c8">U Weinmeisterstraße/</text>
<text x="304.0" y="550.5" font-size="12.9" fill="#6670c8">Gipsstraße</text>
<text x="478.0" y="546.5" font-size="12.9" fill="#6670c8">U Weinmeisterstraße</text>
<text x="165.0" y="585.1" font-size="11.8" fill="#d04030" font-style="italic">Hackesche</text>
<text x="166.0" y="600.1" font-size="11.8" fill="#d04030" font-style="italic">Höfe</text>
<text x="135.0" y="676.9" font-size="11.2" fill="#3a3a3a" transform="rotate(2 135.0 673.0)">Oranienburger Str.</text>
<text x="246.0" y="678.5" font-size="12.9" fill="#6670c8">S Hackescher</text>
<text x="246.0" y="693.5" font-size="12.9" fill="#6670c8">Markt</text>
<text x="28.0" y="692.5" font-size="12.9" fill="#6670c8">bijouplatz</text>
<text x="55.0" y="735.9" font-size="11.2" fill="#3a3a3a" transform="rotate(38 55.0 732.0)">Monbijoupl.</text>
<text x="148.0" y="720.9" font-size="11.2" fill="#3a3a3a" transform="rotate(-42 148.0 717.0)">Große Präsidentenstr.</text>
<text x="222.0" y="728.8" font-size="13.8" fill="#333">Hackescher</text>
<text x="222.0" y="745.8" font-size="13.8" fill="#333">Markt</text>
<text x="404.0" y="693.9" font-size="11.2" fill="#3a3a3a" transform="rotate(-8 404.0 690.0)">Dircksenstr.</text>
<text x="552.0" y="713.9" font-size="11.2" fill="#3a3a3a" transform="rotate(24 552.0 710.0)">Dircksenstr.</text>
<text x="413.0" y="728.1" font-size="11.8" fill="#666" transform="rotate(-9 413.0 724.0)">Berliner Stadtbahn</text>
<text x="293.0" y="794.5" font-size="12.9" fill="#6670c8">S Hackescher</text>
<text x="293.0" y="809.5" font-size="12.9" fill="#6670c8">Markt</text>
<text x="250.0" y="886.5" font-size="12.9" fill="#6670c8">S Hackescher</text>
<text x="250.0" y="901.5" font-size="12.9" fill="#6670c8">Markt</text>
<text x="440.0" y="793.9" font-size="11.2" fill="#3a3a3a" transform="rotate(-30 440.0 790.0)">Rochstr.</text>
<text x="543.0" y="763.9" font-size="11.2" fill="#3a3a3a" transform="rotate(42 543.0 760.0)">Rochstr.</text>
<text x="128.0" y="875.9" font-size="11.2" fill="#3a3a3a" transform="rotate(80 128.0 872.0)">Burgstr.</text>
<text x="58.0" y="847.1" font-size="11.8" fill="#5a9a5a" font-style="italic">James-Simon-</text>
<text x="60.0" y="862.1" font-size="11.8" fill="#5a9a5a" font-style="italic">Park</text>
<text x="30.0" y="875.9" font-size="11.2" fill="#3a3a3a" transform="rotate(16 30.0 872.0)">epromenade</text>
<text x="112.0" y="975.1" font-size="14.5" fill="#333">Friedrichsbrücke</text>
<text x="250.0" y="981.9" font-size="11.2" fill="#3a3a3a" transform="rotate(-27 250.0 978.0)">St. Wolfgang-Str.</text>
<text x="258.0" y="1026.9" font-size="11.2" fill="#3a3a3a" transform="rotate(72 258.0 1023.0)">Heiligegeistg.</text>
<text x="300.0" y="993.9" font-size="11.2" fill="#3a3a3a" transform="rotate(-30 300.0 990.0)">Spreeg.</text>
<text x="240.0" y="1043.9" font-size="11.2" fill="#3a3a3a" transform="rotate(-30 240.0 1040.0)">Spreeg.</text>
<text x="341.0" y="986.5" font-size="12.9" fill="#6670c8">Spandauer</text>
<text x="341.0" y="1001.5" font-size="12.9" fill="#6670c8">Straße/</text>
<text x="341.0" y="1016.5" font-size="12.9" fill="#6670c8">Marienkirche</text>
<text x="514.0" y="908.6" font-size="13.1" fill="#3a3a3a" transform="rotate(-38 514.0 904.0)">Karl-Liebknecht-Str.</text>
<text x="578.0" y="1031.5" font-size="13" fill="#444">Alt-Berlin</text>
<text x="745.0" y="949.5" font-size="12.9" fill="#6670c8">S+U Alexanderplatz/</text>
<text x="766.0" y="964.5" font-size="12.9" fill="#6670c8">Gontardstraße</text>
<text x="1132.0" y="709.6" font-size="13.1" fill="#3a3a3a" transform="rotate(-62 1132.0 705.0)">Tunnel Alexanderpl.</text>
<text x="1018.0" y="924.6" font-size="13.1" fill="#3a3a3a" transform="rotate(-57 1018.0 920.0)">Tunnel Alexanderpl.</text>
<text x="1152.0" y="900.6" font-size="13.1" fill="#3a3a3a" transform="rotate(24 1152.0 896.0)">Karl-Marx-Allee</text>
<text x="1217.0" y="823.9" font-size="11.2" fill="#3a3a3a" transform="rotate(-72 1217.0 820.0)">Berolinastr.</text>
<text x="1300.0" y="696.9" font-size="11.2" fill="#3a3a3a" transform="rotate(-72 1300.0 693.0)">Berolinastr.</text>
<text x="1298.0" y="873.9" font-size="11.2" fill="#3a3a3a" transform="rotate(22 1298.0 870.0)">Berolinastr.</text>
<text x="1318.0" y="721.9" font-size="11.2" fill="#7a7a3a" font-style="italic">Kinderga</text>
<text x="1312.0" y="736.9" font-size="11.2" fill="#7a7a3a" font-style="italic">Traumzaube</text>
<text x="1308.0" y="970.9" font-size="14" fill="#3c50c0" font-weight="bold">Schillingstr</text>
<text x="1076.0" y="996.9" font-size="11.2" fill="#3a3a3a" transform="rotate(-62 1076.0 993.0)">Jacobystr.</text>
<text x="1170.0" y="1003.9" font-size="11.2" fill="#3a3a3a" transform="rotate(-68 1170.0 1000.0)">Jacobystr.</text>
<text x="1192.0" y="988.9" font-size="11.2" fill="#3a3a3a" transform="rotate(22 1192.0 985.0)">Jacobystr.</text>
<text x="1110.0" y="984.0" font-size="17" fill="#3a6ad0">P</text>
<text x="720.0" y="1124.0" font-size="17" fill="#3a6ad0">P</text>
<text x="480.0" y="791.2" font-size="15" fill="#7a8ad8">P</text>
<text x="357.0" y="783.2" font-size="15" fill="#7a8ad8">P</text>
<text x="715.0" y="1045.9" font-size="11.2" fill="#3a3a3a" transform="rotate(-38 715.0 1042.0)">Rathausstr.</text>
<text x="428.0" y="1248.9" font-size="11.2" fill="#3a3a3a" transform="rotate(-33 428.0 1245.0)">Rathausstr.</text>
<text x="800.0" y="901.9" font-size="11.2" fill="#3a3a3a" transform="rotate(62 800.0 898.0)">Dircksenstr.</text>
<text x="775.0" y="1034.6" font-size="13.1" fill="#3a3a3a" transform="rotate(-35 775.0 1030.0)">Grunerstr.</text>
<text x="700.0" y="1189.6" font-size="13.1" fill="#3a3a3a" transform="rotate(-35 700.0 1185.0)">Grunerstr.</text>
<text x="1012.0" y="1026.6" font-size="13.1" fill="#3a3a3a" transform="rotate(-38 1012.0 1022.0)">Grunerstr.</text>
<text x="140.0" y="1085.9" font-size="11.2" fill="#3a3a3a" transform="rotate(68 140.0 1082.0)">Am Lustgarten</text>
<text x="197.0" y="1055.9" font-size="11.2" fill="#3a3a3a" transform="rotate(62 197.0 1052.0)">Vera-Brittain-Ufer</text>
<text x="228.0" y="1145.1" font-size="14.5" fill="#333">Liebknechtbrücke</text>
<text x="179.0" y="1171.6" font-size="13.1" fill="#3a3a3a" transform="rotate(-33 179.0 1167.0)">Schloßpl.</text>
<text x="58.0" y="1166.9" font-size="11.2" fill="#5a9a5a" font-style="italic">Lustgarten</text>
<text x="372.0" y="1163.0" font-size="14.3" fill="#3a7a6a" font-style="italic">Marx-Engels-</text>
<text x="372.0" y="1181.0" font-size="14.3" fill="#3a7a6a" font-style="italic">Forum</text>
<text x="331.0" y="1233.1" font-size="20.3" fill="#8a8ab0">Mitte</text>
<text x="293.0" y="1248.9" font-size="11.2" fill="#3a3a3a" transform="rotate(68 293.0 1245.0)">Spreeufer</text>
<text x="565.0" y="1155.9" font-size="14" fill="#3c50c0" font-weight="bold">Rotes</text>
<text x="565.0" y="1172.9" font-size="14" fill="#3c50c0" font-weight="bold">Rathaus</text>
<text x="708.0" y="1090.9" font-size="11.2" fill="#b04070" font-style="italic">Rathauspassagen</text>
<text x="1027.0" y="1115.9" font-size="11.2" fill="#b04070" font-style="italic">Alexa</text>
<text x="329.0" y="1308.0" font-size="14.3" fill="#333">Rathausbrücke</text>
<text x="490.0" y="1336.6" font-size="16.1" fill="#8a8ab0">Nikolaiviertel</text>
<text x="440.0" y="1293.9" font-size="11.2" fill="#3a3a3a" transform="rotate(68 440.0 1290.0)">Poststr.</text>
<text x="640.0" y="1168.9" font-size="11.2" fill="#3a3a3a" transform="rotate(62 640.0 1165.0)">Jüdenstr.</text>
<text x="22.0" y="1257.5" font-size="13" fill="#333">ßbrücke</text>
<text x="41.0" y="1307.9" font-size="14" fill="#3c50c0" font-weight="bold">seumsinsel</text>
<text x="195.0" y="1331.2" font-size="17.6" fill="#333" font-style="italic">Spreeinsel</text>
<text x="258.0" y="1344.6" font-size="13.1" fill="#3a3a3a">Schloßpl.</text>
<text x="99.0" y="1319.9" font-size="11.2" fill="#3a3a3a" transform="rotate(58 99.0 1316.0)">Schloßpl.</text>
<text x="32.0" y="1361.9" font-size="11.2" fill="#3a3a3a" transform="rotate(66 32.0 1358.0)">Schinkelpl.</text>
<text x="83.0" y="1425.7" font-size="13.5" fill="#333">Schleusenbrücke</text>
<text x="288.0" y="1423.9" font-size="11.2" fill="#3a3a3a" transform="rotate(50 288.0 1420.0)">Breite Str.</text>
<text x="410.0" y="1385.9" font-size="11.2" fill="#3a3a3a" transform="rotate(45 410.0 1382.0)">Spreeufer</text>
<text x="410.0" y="1456.6" font-size="13.1" fill="#5a8ad0" font-style="italic" transform="rotate(62 410.0 1452.0)">Spree</text>
<text x="205.0" y="1451.9" font-size="11.2" fill="#7a7a3a" font-style="italic">European</text>
<text x="205.0" y="1466.9" font-size="11.2" fill="#7a7a3a" font-style="italic">School</text>
<text x="205.0" y="1481.9" font-size="11.2" fill="#7a7a3a" font-style="italic">of Management</text>
<text x="205.0" y="1496.9" font-size="11.2" fill="#7a7a3a" font-style="italic">and Technology</text>
<text x="40.0" y="1476.5" font-size="13" fill="#8a8a8a">Neubau</text>
<text x="46.0" y="1493.5" font-size="13" fill="#8a8a8a">es Auswärtigen</text>
<text x="500.0" y="1499.2" font-size="15" fill="#333">Mühlendammbrücke</text>
<text x="778.0" y="1419.6" font-size="13.1" fill="#3a3a3a" transform="rotate(12 778.0 1415.0)">Stralauer Str.</text>
<text x="970.0" y="1425.6" font-size="13.1" fill="#3a3a3a" transform="rotate(-4 970.0 1421.0)">Stralauer Str.</text>
<text x="1103.0" y="1448.6" font-size="13.1" fill="#3a3a3a" transform="rotate(14 1103.0 1444.0)">Stralauer Str.</text>
<text x="1160.0" y="1334.6" font-size="13.1" fill="#3a3a3a" transform="rotate(-86 1160.0 1330.0)">Alexanderstr.</text>
<text x="1143.0" y="1154.6" font-size="13.1" fill="#3a3a3a" transform="rotate(68 1143.0 1150.0)">Alexanderstr.</text>
<text x="1150.0" y="1053.9" font-size="11.2" fill="#3a3a3a" transform="rotate(66 1150.0 1050.0)">Alexanderstr.</text>
<text x="978.0" y="1171.9" font-size="11.2" fill="#3a3a3a" transform="rotate(80 978.0 1168.0)">Dircksenstr.</text>
<text x="1052.0" y="1338.9" font-size="11.2" fill="#3a3a3a" transform="rotate(60 1052.0 1335.0)">Dircksenstr.</text>
<text x="940.0" y="1184.1" font-size="11.8" fill="#778" transform="rotate(76 940.0 1180.0)">Berliner Stadtbahn</text>
<text x="855.0" y="1148.9" font-size="11.2" fill="#3a3a3a" transform="rotate(62 855.0 1145.0)">Littenstr.</text>
<text x="940.0" y="1358.9" font-size="11.2" fill="#3a3a3a" transform="rotate(80 940.0 1355.0)">Littenstr.</text>
<text x="912.0" y="1368.9" font-size="11.2" fill="#3a3a3a" transform="rotate(76 912.0 1365.0)">Waisenstr.</text>
<text x="855.0" y="1286.9" font-size="11.2" fill="#3a3a3a" transform="rotate(-8 855.0 1283.0)">Parochialstr.</text>
<text x="818.0" y="1310.9" font-size="14" fill="#3c50c0" font-weight="bold">Klosterstraße</text>
<text x="749.0" y="1359.9" font-size="14.1" fill="#8a8ab0">Altes</text>
<text x="749.0" y="1376.9" font-size="14.1" fill="#8a8ab0">Stadthaus</text>
<text x="692.0" y="1278.9" font-size="11.2" fill="#3a3a3a" transform="rotate(80 692.0 1275.0)">Jüdenstr.</text>
<text x="708.0" y="1353.9" font-size="11.2" fill="#3a3a3a" transform="rotate(84 708.0 1350.0)">Jüdenstr.</text>
<text x="700.0" y="1443.9" font-size="11.2" fill="#3a3a3a" transform="rotate(-88 700.0 1440.0)">Neue Jüdenstr.</text>
<text x="810.0" y="1473.9" font-size="11.2" fill="#3a3a3a" transform="rotate(-88 810.0 1470.0)">Klosterstr.</text>
<text x="1065.0" y="1258.9" font-size="11.2" fill="#3a3a3a" transform="rotate(-27 1065.0 1255.0)">Voltairestr.</text>
<text x="950.0" y="1303.9" font-size="11.2" fill="#3a3a3a" transform="rotate(-27 950.0 1300.0)">Voltairestr.</text>
<text x="1228.0" y="1177.9" font-size="11.2" fill="#3a3a3a" transform="rotate(-22 1228.0 1174.0)">Magazinstr.</text>
<text x="1315.0" y="1183.9" font-size="11.2" fill="#3a3a3a" transform="rotate(-68 1315.0 1180.0)">Schillingstr.</text>
<text x="1220.0" y="1296.9" font-size="11.2" fill="#3a3a3a" transform="rotate(22 1220.0 1293.0)">Schillingstr.</text>
<text x="1118.0" y="1375.9" font-size="11.2" fill="#3a3a3a" transform="rotate(-22 1118.0 1372.0)">Schicklerstr.</text>
<text x="1040.0" y="1480.9" font-size="11.2" fill="#3a3a3a" transform="rotate(-3 1040.0 1477.0)">Rolandufer</text>
<text x="930.0" y="1493.9" font-size="11.2" fill="#3a3a3a" transform="rotate(-10 930.0 1490.0)">Rolandufer</text>
<text x="1153.0" y="1493.9" font-size="14" fill="#3c50c0" font-weight="bold">Jannowitzbrücke</text>
<text x="1318.0" y="1023.9" font-size="11.2" fill="#3a3a3a" transform="rotate(25 1318.0 1020.0)">Jacobystr.</text>
<text x="1330.0" y="1493.9" font-size="11.2" fill="#3a3a3a" transform="rotate(30 1330.0 1490.0)">Holzm</text>
<text x="1332.0" y="1271.9" font-size="11.2" fill="#3a3a3a" transform="rotate(22 1332.0 1268.0)">Singe</text>
<text x="640.0" y="1473.9" font-size="11.2" fill="#3a3a3a" transform="rotate(-86 640.0 1470.0)">Am Krögel</text>
<text x="610.0" y="1478.9" font-size="11.2" fill="#3a3a3a" transform="rotate(15 610.0 1475.0)">Rolandufer</text>
<text x="1869.0" y="955.9" font-size="11.2" fill="#3a3a3a" transform="rotate(36 1869.0 952.0)">alisadenstr.</text>
<text x="1866.0" y="1246.9" font-size="11.2" fill="#3a3a3a" transform="rotate(4 1866.0 1243.0)">umenstr.</text>
<text x="1899.0" y="1227.9" font-size="14" fill="#3c50c0" font-weight="bold">Stra</text>
<text x="1878.0" y="1410.9" font-size="11.2" fill="#7a7a3a" font-style="italic">Blumen-</text>
<text x="1878.0" y="1426.9" font-size="11.2" fill="#7a7a3a" font-style="italic">Grundschule</text>
<text x="1895.0" y="593.9" font-size="11.2" fill="#3a3a3a" transform="rotate(-50 1895.0 590.0)">ade</text>
</g>
</svg>
<svg id="ov" width="1912" height="1501" viewBox="0 0 1912 1501">
<polygon points="718.7,292.4 1011.9,343.2 1028.0,353.1 1158.2,601.3 1196.5,810.0 1208.3,881.7 1212.3,900.1 1206.1,933.1 1172.4,1086.1 1153.5,1141.2 1122.7,1192.0 823.2,1396.0 577.2,1395.2 381.4,1363.2 288.9,1348.1 281.0,1347.5 68.6,1262.4 63.5,1230.4 92.4,967.2 116.2,806.5 155.5,680.7 163.3,657.2 272.2,525.1 340.3,443.2 603.5,330.3 643.3,312.7 683.4,295.2" fill="#000094" fill-opacity="0.53" stroke="#00008b" stroke-width="5" stroke-linejoin="round"/>
<circle cx="866.0" cy="318.0" r="6.6" fill="#fff" fill-opacity="0.5" stroke="#555" stroke-opacity="0.4" stroke-width="1"/>
<circle cx="1093.7" cy="477.0" r="6.6" fill="#fff" fill-opacity="0.5" stroke="#555" stroke-opacity="0.4" stroke-width="1"/>
<circle cx="1177.6" cy="706.0" r="6.6" fill="#fff" fill-opacity="0.5" stroke="#555" stroke-opacity="0.4" stroke-width="1"/>
<circle cx="1202.6" cy="845.6" r="6.6" fill="#fff" fill-opacity="0.5" stroke="#555" stroke-opacity="0.4" stroke-width="1"/>
<circle cx="1190.0" cy="1010.0" r="6.6" fill="#fff" fill-opacity="0.5" stroke="#555" stroke-opacity="0.4" stroke-width="1"/>
<circle cx="1163.2" cy="1113.7" r="6.6" fill="#fff" fill-opacity="0.5" stroke="#555" stroke-opacity="0.4" stroke-width="1"/>
<circle cx="1138.5" cy="1166.0" r="6.6" fill="#fff" fill-opacity="0.5" stroke="#555" stroke-opacity="0.4" stroke-width="1"/>
<circle cx="973.7" cy="1292.7" r="6.6" fill="#fff" fill-opacity="0.5" stroke="#555" stroke-opacity="0.4" stroke-width="1"/>
<circle cx="701.7" cy="1395.2" r="6.6" fill="#fff" fill-opacity="0.5" stroke="#555" stroke-opacity="0.4" stroke-width="1"/>
<circle cx="480.0" cy="1378.6" r="6.6" fill="#fff" fill-opacity="0.5" stroke="#555" stroke-opacity="0.4" stroke-width="1"/>
<circle cx="335.0" cy="1356.6" r="6.6" fill="#fff" fill-opacity="0.5" stroke="#555" stroke-opacity="0.4" stroke-width="1"/>
<circle cx="176.5" cy="1304.2" r="6.6" fill="#fff" fill-opacity="0.5" stroke="#555" stroke-opacity="0.4" stroke-width="1"/>
<circle cx="78.3" cy="1098.0" r="6.6" fill="#fff" fill-opacity="0.5" stroke="#555" stroke-opacity="0.4" stroke-width="1"/>
<circle cx="105.1" cy="886.5" r="6.6" fill="#fff" fill-opacity="0.5" stroke="#555" stroke-opacity="0.4" stroke-width="1"/>
<circle cx="136.6" cy="744.0" r="6.6" fill="#fff" fill-opacity="0.5" stroke="#555" stroke-opacity="0.4" stroke-width="1"/>
<circle cx="219.0" cy="591.6" r="6.6" fill="#fff" fill-opacity="0.5" stroke="#555" stroke-opacity="0.4" stroke-width="1"/>
<circle cx="306.0" cy="483.3" r="6.6" fill="#fff" fill-opacity="0.5" stroke="#555" stroke-opacity="0.4" stroke-width="1"/>
<circle cx="472.4" cy="388.3" r="6.6" fill="#fff" fill-opacity="0.5" stroke="#555" stroke-opacity="0.4" stroke-width="1"/>
<circle cx="718.7" cy="292.4" r="6.7" fill="#fff" stroke="#7a7a7a" stroke-width="1.2"/>
<circle cx="1011.9" cy="343.2" r="6.7" fill="#fff" stroke="#7a7a7a" stroke-width="1.2"/>
<circle cx="1028.0" cy="353.1" r="6.7" fill="#fff" stroke="#7a7a7a" stroke-width="1.2"/>
<circle cx="1158.2" cy="601.3" r="6.7" fill="#fff" stroke="#7a7a7a" stroke-width="1.2"/>
<circle cx="1196.5" cy="810.0" r="6.7" fill="#fff" stroke="#7a7a7a" stroke-width="1.2"/>
<circle cx="1208.3" cy="881.7" r="6.7" fill="#fff" stroke="#7a7a7a" stroke-width="1.2"/>
<circle cx="1212.3" cy="900.1" r="6.7" fill="#fff" stroke="#7a7a7a" stroke-width="1.2"/>
<circle cx="1206.1" cy="933.1" r="6.7" fill="#fff" stroke="#7a7a7a" stroke-width="1.2"/>
<circle cx="1172.4" cy="1086.1" r="6.7" fill="#fff" stroke="#7a7a7a" stroke-width="1.2"/>
<circle cx="1153.5" cy="1141.2" r="6.7" fill="#fff" stroke="#7a7a7a" stroke-width="1.2"/>
<circle cx="1122.7" cy="1192.0" r="6.7" fill="#fff" stroke="#7a7a7a" stroke-width="1.2"/>
<circle cx="823.2" cy="1396.0" r="6.7" fill="#fff" stroke="#7a7a7a" stroke-width="1.2"/>
<circle cx="577.2" cy="1395.2" r="6.7" fill="#fff" stroke="#7a7a7a" stroke-width="1.2"/>
<circle cx="381.4" cy="1363.2" r="6.7" fill="#fff" stroke="#7a7a7a" stroke-width="1.2"/>
<circle cx="288.9" cy="1348.1" r="6.7" fill="#fff" stroke="#7a7a7a" stroke-width="1.2"/>
<circle cx="281.0" cy="1347.5" r="6.7" fill="#fff" stroke="#7a7a7a" stroke-width="1.2"/>
<circle cx="68.6" cy="1262.4" r="6.7" fill="#fff" stroke="#7a7a7a" stroke-width="1.2"/>
<circle cx="63.5" cy="1230.4" r="6.7" fill="#fff" stroke="#7a7a7a" stroke-width="1.2"/>
<circle cx="92.4" cy="967.2" r="6.7" fill="#fff" stroke="#7a7a7a" stroke-width="1.2"/>
<circle cx="116.2" cy="806.5" r="6.7" fill="#fff" stroke="#7a7a7a" stroke-width="1.2"/>
<circle cx="155.5" cy="680.7" r="6.7" fill="#fff" stroke="#7a7a7a" stroke-width="1.2"/>
<circle cx="163.3" cy="657.2" r="6.7" fill="#fff" stroke="#7a7a7a" stroke-width="1.2"/>
<circle cx="272.2" cy="525.1" r="6.7" fill="#fff" stroke="#7a7a7a" stroke-width="1.2"/>
<circle cx="340.3" cy="443.2" r="6.7" fill="#fff" stroke="#7a7a7a" stroke-width="1.2"/>
<circle cx="603.5" cy="330.3" r="6.7" fill="#fff" stroke="#7a7a7a" stroke-width="1.2"/>
<circle cx="643.3" cy="312.7" r="6.7" fill="#fff" stroke="#7a7a7a" stroke-width="1.2"/>
<circle cx="683.4" cy="295.2" r="6.7" fill="#fff" stroke="#7a7a7a" stroke-width="1.2"/>
</svg>
<div id="pop"></div>
<svg style="position:absolute;left:552px;top:540px" width="30" height="14" viewBox="552 540 30 14"><path d="M554.7 540 L577.8 540 L566.3 552.5Z" fill="#fff"/></svg>
<div class="t" style="left:438.2px;top:465.2px;font-size:17.5px;line-height:20.11px;letter-spacing:-0.329px;color:#222;font-weight:bold;">Isochrone</div>
<svg style="position:absolute;left:697px;top:454px" width="18" height="18" viewBox="697 454 18 18"><path d="M700.8 456.5 L710.8 465.5 M710.8 456.5 L700.8 465.5" stroke="#444" stroke-width="1.3" fill="none"/><path d="M698.2 469.6 H712.6" stroke="#444" stroke-width="1"/></svg>
<div id="ctx"><div id="ctxh"></div><div id="ctxsep"></div></div>
<svg style="position:absolute;left:683px;top:641px" width="293" height="35" viewBox="683 641 293 35">
<path d="M705.2 665.8 L706.8 661.2 L709.8 664.2Z M707.6 660.4 L716 652 L719 655 L710.6 663.4Z M716.8 651.2 L718 650 L721 653 L719.8 654.2Z" fill="#f2f2f2"/>
<path d="M742.3 650.3 L753.5 656.6 L742.3 665.8" fill="none" stroke="#f2f2f2" stroke-width="1.5"/><circle cx="742.3" cy="650.3" r="1.6" fill="#f2f2f2"/><circle cx="742.3" cy="665.8" r="1.6" fill="#f2f2f2"/>
<path d="M783 649.7 L790 654 L788 661 L783.5 665 L779.5 661 L775.8 654Z" fill="#f2f2f2"/><circle cx="783" cy="656.3" r="2.9" fill="#323737"/>
<path d="M810.2 648 V668" stroke="#f2f2f2" stroke-width="1.2"/>
<path d="M836.8 648.7 L846 654.3 L836.8 660 L827.6 654.3Z" fill="#f2f2f2"/><path d="M828.5 658.8 L836.8 663.8 L845.1 658.8 M828.5 663 L836.8 668 L845.1 663" fill="none" stroke="#f2f2f2" stroke-width="1.7"/>
<rect x="870.5" y="650" width="10.7" height="10.7" fill="#f2f2f2"/><rect x="864.3" y="654.6" width="12" height="12" fill="#323737"/><rect x="865.3" y="655.6" width="10.4" height="10.4" fill="#f2f2f2"/>
<path d="M905.3 649.2 h5 v1.6 h-5z M902 653.6 h11.8 l-1.7 13.2 h-8.4z" fill="#f2f2f2"/><rect x="901" y="650.4" width="13.7" height="2.4" rx="1.2" fill="#f2f2f2"/>
</svg>
<div class="t" style="left:696.4px;top:686.4px;font-size:19px;line-height:21.83px;letter-spacing:-0.217px;color:#222;">Als GeoJSON kopieren</div>
<div class="t" style="left:696.4px;top:718.6px;font-size:19px;line-height:21.83px;letter-spacing:0.322px;color:#222;">Display measure</div>
<div class="t" style="left:696.4px;top:761.3px;font-size:19px;line-height:21.83px;letter-spacing:-1.112px;color:#222;">52.521338,13.410096</div>
<div class="t" style="left:696.4px;top:794.4px;font-size:19px;line-height:21.83px;letter-spacing:0.471px;color:#222;">Route von hier</div>
<div class="t" style="left:696.4px;top:826.7px;font-size:19px;line-height:21.83px;letter-spacing:0.568px;color:#222;">Compute isochrone from here</div>
<div class="t" style="left:696.4px;top:859.2px;font-size:19px;line-height:21.83px;letter-spacing:0.451px;color:#222;">Bearbeiten in OpenStreetMap</div>
<div id="panel">
<div class="pbtn" style="left:1751px;top:14px"><svg width="37" height="33" viewBox="0 0 37 33"><path d="M13.8 9.3 L18.5 13.6 L23.2 9.3 M13.8 23.2 L18.5 18.9 L23.2 23.2" fill="none" stroke="#f0f0f0" stroke-width="1.3"/></svg></div>
<div class="pbtn" style="left:1795px;top:14px"><svg width="37" height="33" viewBox="0 0 37 33"><path d="M13.3 11.2 L23.3 21.2 M23.3 11.2 L13.3 21.2" fill="none" stroke="#f0f0f0" stroke-width="1.3"/></svg></div>
<svg style="position:absolute;left:1364px;top:70px" width="22" height="22" viewBox="0 0 22 22"><path d="M3 3.2 L16.5 5.8 L14.2 16.8 L2.2 18.8 Z" fill="#efefef"/><g fill="#efefef"><rect x="1.2" y="1.2" width="3.6" height="3.6"/><rect x="14.8" y="4" width="3.6" height="3.6"/><rect x="12.6" y="15.2" width="3.6" height="3.6"/><rect x="0.4" y="17" width="3.6" height="3.6"/></g></svg>
<div class="t" style="left:1395.0px;top:70.8px;font-size:19px;line-height:21.83px;letter-spacing:-0.146px;color:#fff;font-weight:bold;">Eigenschaften des Elements</div>
<div class="sel" style="left:1359px;top:113px;width:420px;height:50px"></div>
<div class="t" style="left:1380.0px;top:129.4px;font-size:16.5px;line-height:18.96px;letter-spacing:0.042px;color:#d6d6d6;">Isochrone</div>
<svg style="position:absolute;left:1760px;top:133px" width="14" height="12" viewBox="0 0 14 12"><path d="M2.3 3 L6.8 7.8 L11.3 3" fill="none" stroke="#efefef" stroke-width="1.5"/></svg>
<svg style="position:absolute;left:1785px;top:130px" width="18" height="17" viewBox="0 0 18 17"><path d="M1 15.6 L2.6 11.2 L5.4 14 Z M3.4 10.4 L11.2 2.6 L14 5.4 L6.2 13.2 Z M12 1.8 L13.2 0.7 L16 3.5 L14.8 4.6 Z" fill="#efefef"/></svg>
<svg style="position:absolute;left:1812px;top:131px" width="17" height="14" viewBox="0 0 17 14"><g fill="#efefef"><rect x="0" y="0.8" width="16" height="2.2"/><rect x="0" y="4.4" width="4.6" height="1.6"/><rect x="5.8" y="4.4" width="10.2" height="1.6"/><rect x="0" y="7.2" width="4.6" height="1.6"/><rect x="5.8" y="7.2" width="10.2" height="1.6"/><rect x="0" y="10" width="4.6" height="1.6"/><rect x="5.8" y="10" width="10.2" height="1.6"/><rect x="0" y="12.4" width="16" height="1"/></g></svg>
<div class="t" style="left:1359.0px;top:184.4px;font-size:15px;line-height:17.23px;letter-spacing:-0.307px;color:#e4e4e4;">name</div>
<div class="inp" style="left:1359px;top:217px;width:473px;height:50px"></div>
<div class="t" style="left:1359.0px;top:287.9px;font-size:15px;line-height:17.23px;letter-spacing:0.246px;color:#e4e4e4;">description</div>
<svg style="position:absolute;left:1443px;top:287px" width="22" height="22" viewBox="0 0 22 22"><circle cx="11" cy="11" r="9.2" fill="none" stroke="#efefef" stroke-width="1.4"/><text x="11" y="16" font-size="14" font-weight="bold" text-anchor="middle" fill="#efefef" font-family="Liberation Sans, sans-serif">?</text></svg>
<div class="inp" style="left:1359px;top:321px;width:473px;height:168px"></div>
<svg style="position:absolute;left:1820px;top:477px" width="11" height="11" viewBox="0 0 11 11"><path d="M10 1 L1 10 M10 5 L5 10 M10 8.5 L8.5 10" stroke="#666" stroke-width="1" fill="none"/></svg>
<div class="t" style="left:1359.0px;top:510.9px;font-size:15px;line-height:17.23px;letter-spacing:0.003px;color:#e4e4e4;">group_index</div>
<div class="inp" style="left:1359px;top:542px;width:473px;height:50px"></div>
<div class="t" style="left:1380.0px;top:558.1px;font-size:16.5px;line-height:18.96px;letter-spacing:-0.177px;color:#cfcfcf;">0</div>
<div class="t" style="left:1359.0px;top:613.9px;font-size:15px;line-height:17.23px;letter-spacing:-0.140px;color:#e4e4e4;">value</div>
<div class="inp" style="left:1359px;top:646px;width:473px;height:50px"></div>
<div class="t" style="left:1380.0px;top:662.1px;font-size:16.5px;line-height:18.96px;letter-spacing:-0.615px;color:#cfcfcf;">600</div>
<div class="t" style="left:1359.0px;top:717.9px;font-size:15px;line-height:17.23px;letter-spacing:0.342px;color:#e4e4e4;">duration</div>
<div class="inp" style="left:1359px;top:750px;width:473px;height:50px"></div>
<div class="t" style="left:1380.0px;top:766.1px;font-size:16.5px;line-height:18.96px;letter-spacing:-0.853px;color:#cfcfcf;">10</div>
<div class="t" style="left:1359.0px;top:820.9px;font-size:15px;line-height:17.23px;letter-spacing:0.291px;color:#e4e4e4;">profile</div>
<div class="inp" style="left:1359px;top:854px;width:473px;height:50px"></div>
<div class="t" style="left:1380.0px;top:870.1px;font-size:16.5px;line-height:18.96px;letter-spacing:0.387px;color:#cfcfcf;">foot-walking</div>
<div class="btn" style="left:1359px;top:921px;width:239px;height:50px"></div>
<svg style="position:absolute;left:1387px;top:939px" width="14" height="14" viewBox="0 0 14 14"><path d="M7 1 V13 M1 7 H13" stroke="#fff" stroke-width="2.2"/></svg>
<div class="t" style="left:1409.4px;top:937.0px;font-size:16.3px;line-height:18.73px;letter-spacing:0.018px;color:#dcdcdc;">Neues Feld hinzufügen</div>
<div class="fs" style="left:1359px;top:977px;width:473px;height:42px"></div>
<svg style="position:absolute;left:1365px;top:993px" width="11" height="11" viewBox="0 0 11 11"><path d="M1.2 1.2 L9.8 5.5 L1.2 9.8 Z" fill="#fff"/></svg>
<div class="t" style="left:1381.8px;top:989.2px;font-size:17.5px;line-height:20.11px;letter-spacing:-0.289px;color:#fff;font-weight:bold;">Formeigenschaften</div>
<div class="fs" style="left:1359px;top:1026px;width:473px;height:42px"></div>
<svg style="position:absolute;left:1365px;top:1042px" width="11" height="11" viewBox="0 0 11 11"><path d="M1.2 1.2 L9.8 5.5 L1.2 9.8 Z" fill="#fff"/></svg>
<div class="t" style="left:1381.8px;top:1038.2px;font-size:17.5px;line-height:20.11px;letter-spacing:-0.164px;color:#fff;font-weight:bold;">Line decoration</div>
<div class="fs" style="left:1359px;top:1075px;width:473px;height:42px"></div>
<svg style="position:absolute;left:1365px;top:1091px" width="11" height="11" viewBox="0 0 11 11"><path d="M1.2 1.2 L9.8 5.5 L1.2 9.8 Z" fill="#fff"/></svg>
<div class="t" style="left:1381.8px;top:1087.2px;font-size:17.5px;line-height:20.11px;letter-spacing:-0.156px;color:#fff;font-weight:bold;">Erweiterte Eigenschaften</div>
<div class="fs" style="left:1359px;top:1124px;width:473px;height:42px"></div>
<svg style="position:absolute;left:1365px;top:1140px" width="11" height="11" viewBox="0 0 11 11"><path d="M1.2 1.2 L9.8 5.5 L1.2 9.8 Z" fill="#fff"/></svg>
<div class="t" style="left:1381.8px;top:1136.2px;font-size:17.5px;line-height:20.11px;letter-spacing:0.076px;color:#fff;font-weight:bold;">Interaktionsoptionen</div>
<div class="fso" style="left:1359px;top:1173px;width:473px;height:137px"><div class="fsh"></div></div>
<svg style="position:absolute;left:1366px;top:1188px" width="11" height="11" viewBox="0 0 11 11"><path d="M1 1.5 L10 1.5 L5.5 10 Z" fill="#fff"/></svg>
<div class="t" style="left:1382.8px;top:1184.7px;font-size:17.5px;line-height:20.11px;letter-spacing:-0.039px;color:#fff;font-weight:bold;">Erweiterte Aktionen</div>
<div class="btn" style="left:1370px;top:1230px;width:211px;height:70px"></div>
<div class="btn" style="left:1591px;top:1230px;width:210px;height:70px"></div>
<svg style="position:absolute;left:1434px;top:1251px" width="20" height="27" viewBox="0 0 20 27"><path d="M6.5 1.5 h7 v2 h-7z M1.5 4.2 h17 v2.6 h-17z M2.4 8.4 h15.2 l-2.1 17 h-11z" fill="#efefef"/><rect x="1.5" y="4.2" width="17" height="2.6" rx="1.3" fill="#efefef"/></svg>
<div class="t" style="left:1467.5px;top:1254.2px;font-size:16.3px;line-height:18.73px;letter-spacing:-0.188px;color:#dcdcdc;">Löschen</div>
<div class="t" style="left:1686.0px;top:1244.2px;font-size:16.3px;line-height:18.73px;letter-spacing:0.297px;color:#dcdcdc;">In Linien</div>
<div class="t" style="left:1652.5px;top:1271.2px;font-size:16.3px;line-height:18.73px;letter-spacing:0.392px;color:#dcdcdc;">umwandeln</div>
</div>
<div id="tb">
<div style="position:absolute;left:0;top:361px;width:45px;height:45px;background:#3d4444"></div>
<div style="position:absolute;left:0;top:225px;width:45px;height:1.3px;background:#f2f2f2"></div>
<svg style="position:absolute;left:0;top:0" width="45" height="591" viewBox="1858 7 45 591">
<path d="M1880.5 18 a10.4 10.4 0 0 1 10.4 10.4 c0 6.5 -6.5 12.5 -10.4 19.3 c-3.9 -6.8 -10.4 -12.8 -10.4 -19.3 a10.4 10.4 0 0 1 10.4 -10.4z" fill="#f2f2f2"/><circle cx="1880.5" cy="27.8" r="4.6" fill="#2a2e30"/>
<path d="M1871.5 65 L1889.3 71.5 L1876.3 90" fill="none" stroke="#f2f2f2" stroke-width="1.2"/>
<rect x="1869.2" y="62.7" width="4.6" height="4.6" fill="#2a2e30" stroke="#f2f2f2" stroke-width="1.2"/>
<rect x="1887.0" y="69.2" width="4.6" height="4.6" fill="#2a2e30" stroke="#f2f2f2" stroke-width="1.2"/>
<rect x="1874.0" y="87.7" width="4.6" height="4.6" fill="#2a2e30" stroke="#f2f2f2" stroke-width="1.2"/>
<path d="M1872.8 111.3 L1890.5 118 L1888 132.5 L1870.2 133.7Z" fill="#f2f2f2"/>
<rect x="1870.5" y="109.0" width="4.6" height="4.6" fill="#2a2e30" stroke="#f2f2f2" stroke-width="1.2"/>
<rect x="1888.2" y="115.7" width="4.6" height="4.6" fill="#2a2e30" stroke="#f2f2f2" stroke-width="1.2"/>
<rect x="1885.7" y="130.2" width="4.6" height="4.6" fill="#2a2e30" stroke="#f2f2f2" stroke-width="1.2"/>
<rect x="1867.9" y="131.4" width="4.6" height="4.6" fill="#2a2e30" stroke="#f2f2f2" stroke-width="1.2"/>
<path d="M1870.5 153.5 L1888 157.5 L1868 174Z M1890.3 165 L1893 180.3 L1875.3 178.6Z" fill="#f2f2f2"/>
<rect x="1868.2" y="151.2" width="4.6" height="4.6" fill="#2a2e30" stroke="#f2f2f2" stroke-width="1.2"/>
<rect x="1885.7" y="155.2" width="4.6" height="4.6" fill="#2a2e30" stroke="#f2f2f2" stroke-width="1.2"/>
<rect x="1865.7" y="171.7" width="4.6" height="4.6" fill="#2a2e30" stroke="#f2f2f2" stroke-width="1.2"/>
<rect x="1888.0" y="162.7" width="4.6" height="4.6" fill="#2a2e30" stroke="#f2f2f2" stroke-width="1.2"/>
<rect x="1890.7" y="178.0" width="4.6" height="4.6" fill="#2a2e30" stroke="#f2f2f2" stroke-width="1.2"/>
<rect x="1873.0" y="176.3" width="4.6" height="4.6" fill="#2a2e30" stroke="#f2f2f2" stroke-width="1.2"/>
<path d="M1888.5 200 C1876 204 1869 210 1873 213.5 C1877 217 1887 214.5 1887.5 219.5 C1888 224 1880 225 1871.5 225" fill="none" stroke="#f2f2f2" stroke-width="1.2"/>
<rect x="1886.2" y="197.5" width="4.6" height="4.6" fill="#2a2e30" stroke="#f2f2f2" stroke-width="1.2"/>
<rect x="1869.2" y="222.7" width="4.6" height="4.6" fill="#2a2e30" stroke="#f2f2f2" stroke-width="1.2"/>
<circle cx="1880.5" cy="257.8" r="12.5" fill="#f2f2f2"/><circle cx="1880.5" cy="251.3" r="2.3" fill="#2a2e30"/><rect x="1878.8" y="256" width="3.4" height="9.3" fill="#2a2e30"/>
<circle cx="1880.4" cy="303.6" r="15.3" fill="#f2f2f2"/><path d="M1880.4 295 L1889 304 L1883.3 304 L1883.3 310.6 L1877.5 310.6 L1877.5 304 L1871.8 304Z" fill="#2a2e30"/>
<g fill="#f2f2f2"><rect x="1867.8" y="337" width="11.3" height="13.4"/><rect x="1867.8" y="353.4" width="11.3" height="6.6"/><rect x="1882" y="337" width="11.3" height="6.6"/><rect x="1882" y="346.6" width="11.3" height="13.4"/></g>
<path d="M1880.5 378 L1894.4 386.5 L1880.5 395 L1866.6 386.5Z" fill="#f2f2f2"/><path d="M1868 393 L1880.5 400.6 L1893 393 M1868 399.8 L1880.5 407.4 L1893 399.8" fill="none" stroke="#f2f2f2" stroke-width="2.6"/>
<rect x="1874.3" y="432.3" width="20" height="20" fill="none" stroke="#f2f2f2" stroke-width="2"/>
<rect x="1865.3" y="423.3" width="22.4" height="22.7" fill="#f2f2f2"/><rect x="1867.3" y="425.3" width="16.5" height="16.5" fill="#d5e4b8"/><path d="M1876 425.3 c-2 4 3 6 1 9 c-1 3 2 5 4 7.3 l2.8 0 l0 -14 l-2 -2.3z" fill="#aad3df"/><path d="M1871.5 427 c1 5 -3 8 -3 13" stroke="#e8a060" stroke-width="0.8" fill="none"/>
<circle cx="1878.3" cy="485" r="3.6" fill="#f2f2f2"/>
<path d="M1882.2 481.2 l8.6 -0.4 l-3 -3 l5.6 -5.6 l-2.2 -2.2 l-5.6 5.6 l-3 -3z" fill="#f2f2f2"/>
<path d="M1874.4 488.8 l-8.6 0.4 l3 3 l-5.6 5.6 l2.2 2.2 l5.6 -5.6 l3 3z" fill="#f2f2f2"/>
<circle cx="1871.8" cy="528.5" r="7.6" fill="#f2f2f2"/><circle cx="1868.8" cy="528.5" r="1.9" fill="#2a2e30"/><path d="M1877 525.6 L1893.6 525.6 L1896.7 528.5 L1893.8 531.6 L1892 530.2 L1890.2 531.6 L1888.4 530.2 L1886.6 531.6 L1884.8 530.2 L1883 531.6 L1877 531.6Z" fill="#f2f2f2"/>
<path d="M1895.3 570.7 L1895.3 576.7 L1891.0 577.2 L1890.4 578.7 L1893.1 582.1 L1888.8 586.4 L1885.4 583.7 L1883.9 584.3 L1883.4 588.6 L1877.4 588.6 L1876.9 584.3 L1875.4 583.7 L1872.0 586.4 L1867.7 582.1 L1870.4 578.7 L1869.8 577.2 L1865.5 576.7 L1865.5 570.7 L1869.8 570.2 L1870.4 568.7 L1867.7 565.3 L1872.0 561.0 L1875.4 563.7 L1876.9 563.1 L1877.4 558.8 L1883.4 558.8 L1883.9 563.1 L1885.4 563.7 L1888.8 561.0 L1893.1 565.3 L1890.4 568.7 L1891.0 570.2Z" fill="#f2f2f2"/><circle cx="1880.4" cy="573.7" r="4.2" fill="#2a2e30"/>
</svg></div>
</body></html>
